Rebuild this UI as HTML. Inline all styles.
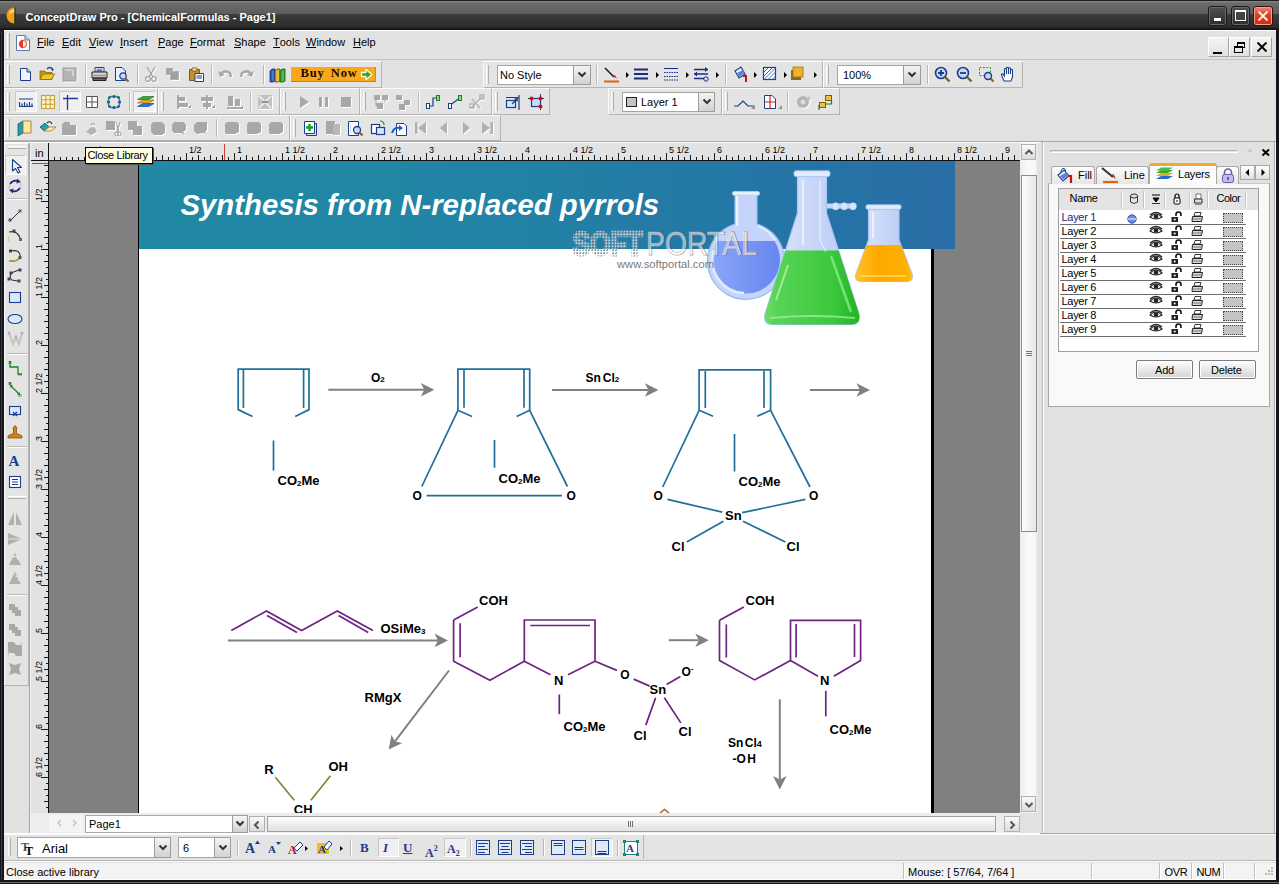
<!DOCTYPE html>
<html><head><meta charset="utf-8">
<style>
*{margin:0;padding:0;box-sizing:border-box}
html,body{width:1279px;height:884px;overflow:hidden;background:#e1e1e1;font-family:"Liberation Sans",sans-serif;font-size:11px;color:#000}
.a{position:absolute}
svg.a{overflow:visible}
.tbar{position:absolute;background:#e4e4e4;border-top:1px solid #fbfbfb;border-left:1px solid #fbfbfb;border-bottom:1px solid #b4b4b4;border-right:1px solid #b4b4b4}
.grip{position:absolute;width:3px;border-left:1px solid #fff;border-right:1px solid #b0b0b0;background:#e8e8e8}
.vsep{position:absolute;width:2px;border-left:1px solid #b8b8b8;border-right:1px solid #fff}
.hsep{position:absolute;height:2px;border-top:1px solid #b8b8b8;border-bottom:1px solid #fff}
.combo{position:absolute;background:#fff;border:1px solid #a5a5a5;border-right:none}
.cbtn{position:absolute;background:linear-gradient(#f4f4f4,#d2d2d2);border:1px solid #9c9c9c}
.pressed{position:absolute;background:#f0f0f0;border:1px solid #c8c8c8;border-bottom-color:#fff;border-right-color:#fff}
u{text-decoration:none;border-bottom:1px solid #000;line-height:10px;display:inline-block}
</style></head><body>
<div class="a" style="left:0px;top:0px;width:1279px;height:30px;background:linear-gradient(#1e1e1e 0,#1e1e1e 1px,#8a8a8a 1px,#6c6c6c 3px,#5c5c5c 14px,#3d3d3d 14px,#2e2e2e 25px,#262626 28px,#111 29px)"></div>
<svg class="a" style="left:4px;top:6px;" width="14" height="18" viewBox="0 0 14 18"><path d="M10.5 1.5 A8 8 0 0 0 10.5 17.5 Z" fill="#f0a010"/><path d="M10.5 3 A6 7 0 0 0 5 9 Q8 6 10.5 6Z" fill="#ffe890" opacity=".8"/><path d="M11 1.5 V17.5" stroke="#1a2a10" stroke-width="1"/></svg>
<div class="a" style="left:25.5px;top:11.69px;font-size:11px;line-height:11px;white-space:pre;color:#fff;font-weight:bold">ConceptDraw Pro - [ChemicalFormulas - Page1]</div>
<div class="a" style="left:1208px;top:6px;width:19px;height:20px;border:1px solid #1a1a1a;border-radius:3px;background:linear-gradient(#505050,#2c2c2c);box-shadow:inset 0 0 0 1px #6a6a6a"></div>
<div class="a" style="left:1214px;top:18px;width:7px;height:3px;background:#fff"></div>
<div class="a" style="left:1231px;top:6px;width:19px;height:20px;border:1px solid #1a1a1a;border-radius:3px;background:linear-gradient(#505050,#2c2c2c);box-shadow:inset 0 0 0 1px #6a6a6a"></div>
<div class="a" style="left:1235px;top:10px;width:11px;height:11px;border:1px solid #fff;border-top-width:2px;background:#444"></div>
<div class="a" style="left:1253px;top:6px;width:20px;height:20px;border:1px solid #3a1008;border-radius:3px;background:linear-gradient(#f08a70,#d8402a 45%,#c8301c);box-shadow:inset 0 0 0 1px #f4a090"></div>
<svg class="a" style="left:1257px;top:10px;" width="12" height="12" viewBox="0 0 12 12"><path d="M1.5 1.5 L10.5 10.5 M10.5 1.5 L1.5 10.5" stroke="#fff2d8" stroke-width="1.8"/></svg>
<div class="a" style="left:0px;top:29px;width:4px;height:855px;background:#14141c"></div>
<div class="a" style="left:1px;top:30px;width:1px;height:850px;background:#3a3a44"></div>
<div class="a" style="left:1276px;top:29px;width:3px;height:855px;background:#14141c"></div>
<div class="a" style="left:0px;top:880px;width:1279px;height:4px;background:#14141c"></div>
<div class="a" style="left:4px;top:30px;width:1272px;height:1px;background:#fff"></div>
<div class="a" style="left:4px;top:31px;width:1272px;height:29px;background:#e2e2e2;border-bottom:1px solid #c4c4c4"></div>
<div class="a" style="left:7px;top:33px;width:3px;height:25px;border-left:1px solid #fff;border-right:1px solid #aaa"></div>
<svg class="a" style="left:15px;top:34px;" width="16" height="18" viewBox="0 0 16 18"><path d="M1.5 1.5 H10 L14.5 6 V16.5 H1.5 Z" fill="#fff" stroke="#5a7ab0"/><path d="M10 1.5 V6 H14.5" fill="#b8c8e8" stroke="#5a7ab0"/><circle cx="8" cy="10" r="4.2" fill="#e84020"/><path d="M8 5.8 A4.2 4.2 0 0 1 8 14.2 Z" fill="#fff"/><path d="M8 6.5 A3.5 3.5 0 0 1 8 13.5" fill="none" stroke="#e84020" stroke-width="1"/></svg>
<div class="a" style="left:37px;top:36.69px;font-size:11px;line-height:11px;white-space:pre;"><u>F</u>ile</div>
<div class="a" style="left:62px;top:36.69px;font-size:11px;line-height:11px;white-space:pre;"><u>E</u>dit</div>
<div class="a" style="left:89px;top:36.69px;font-size:11px;line-height:11px;white-space:pre;"><u>V</u>iew</div>
<div class="a" style="left:120px;top:36.69px;font-size:11px;line-height:11px;white-space:pre;"><u>I</u>nsert</div>
<div class="a" style="left:158px;top:36.69px;font-size:11px;line-height:11px;white-space:pre;"><u>P</u>age</div>
<div class="a" style="left:190px;top:36.69px;font-size:11px;line-height:11px;white-space:pre;"><u>F</u>ormat</div>
<div class="a" style="left:234px;top:36.69px;font-size:11px;line-height:11px;white-space:pre;"><u>S</u>hape</div>
<div class="a" style="left:273px;top:36.69px;font-size:11px;line-height:11px;white-space:pre;"><u>T</u>ools</div>
<div class="a" style="left:306px;top:36.69px;font-size:11px;line-height:11px;white-space:pre;"><u>W</u>indow</div>
<div class="a" style="left:353px;top:36.69px;font-size:11px;line-height:11px;white-space:pre;"><u>H</u>elp</div>
<div class="a" style="left:1208px;top:37px;width:21px;height:20px;background:linear-gradient(#f4f4f4,#e0e0e0);border:1px solid #fff;border-right-color:#a0a0a0;border-bottom-color:#a0a0a0"></div>
<div class="a" style="left:1229px;top:37px;width:21px;height:20px;background:linear-gradient(#f4f4f4,#e0e0e0);border:1px solid #fff;border-right-color:#a0a0a0;border-bottom-color:#a0a0a0"></div>
<div class="a" style="left:1251px;top:37px;width:21px;height:20px;background:linear-gradient(#f4f4f4,#e0e0e0);border:1px solid #fff;border-right-color:#a0a0a0;border-bottom-color:#a0a0a0"></div>
<div class="a" style="left:1213px;top:52px;width:9px;height:2px;background:#000"></div>
<svg class="a" style="left:1233px;top:41px;" width="14" height="13" viewBox="0 0 14 13"><rect x="4.5" y="1.5" width="7" height="5" fill="none" stroke="#000"/><rect x="4.5" y="1.5" width="7" height="1.5" fill="#000"/><rect x="1.5" y="5.5" width="8" height="6" fill="#e8e8e8" stroke="#000"/><rect x="1.5" y="5.5" width="8" height="1.5" fill="#000"/></svg>
<svg class="a" style="left:1256px;top:41px;" width="12" height="12" viewBox="0 0 12 12"><path d="M1.5 1.5 L10.5 10.5 M10.5 1.5 L1.5 10.5" stroke="#000" stroke-width="1.8"/></svg>
<div class="a" style="left:4px;top:60px;width:1272px;height:82px;background:#e1e1e1"></div>
<div class="tbar" style="left:4px;top:61px;width:378px;height:27px"></div>
<div class="grip" style="left:7px;top:65px;height:19px"></div>
<svg class="a" style="left:17px;top:66px;" width="16" height="16" viewBox="0 0 16 16"><path d="M3.5 2.5 H10 L13.5 6 V14.5 H3.5 Z" fill="#eef4fc" stroke="#1c3c8c"/><path d="M10 2.5 V6 H13.5" fill="#c8d8f0" stroke="#1c3c8c"/></svg>
<svg class="a" style="left:39px;top:66px;" width="16" height="16" viewBox="0 0 16 16"><path d="M1 5 H6 L7 6.5 H13 V13.5 H1 Z" fill="#c89810" stroke="#8a6a00" stroke-width=".8"/><path d="M1 13.5 L4 8 H15.5 L12.5 13.5 Z" fill="#f0c828" stroke="#8a6a00" stroke-width=".8"/><path d="M8 3 Q11 0 13.5 3" fill="none" stroke="#1c3c8c" stroke-width="1.3"/><path d="M12 2.5 L15 3 L13.5 5.5Z" fill="#1c3c8c"/></svg>
<svg class="a" style="left:61px;top:66px;filter:drop-shadow(1px 1px 0 #fff)" width="16" height="16" viewBox="0 0 16 16"><rect x="2" y="2" width="13" height="13" fill="#b4b4b4" stroke="#9c9c9c"/><path d="M4 4 H12 V10" fill="none" stroke="#e8e8e8" stroke-width="1.2"/></svg>
<svg class="a" style="left:91px;top:66px;" width="16" height="16" viewBox="0 0 16 16"><path d="M4 1.5 H13 V6 H4Z" fill="#fff" stroke="#1c3c8c"/><path d="M5.5 3.2 H11.5 M5.5 4.6 H11" stroke="#1c3c8c" stroke-width=".8"/><path d="M1 6 H16 V12 H1Z" fill="#d0d8e8" stroke="#222"/><path d="M1 9.5 H16" stroke="#c09030" stroke-width="1.5"/><path d="M2 12 H15 V14.5 H2Z" fill="#666" stroke="#222"/></svg>
<svg class="a" style="left:113px;top:66px;" width="16" height="16" viewBox="0 0 16 16"><path d="M2.5 1.5 H9 L12.5 5 V14.5 H2.5 Z" fill="#e8f0fc" stroke="#1c3c8c"/><circle cx="10" cy="10" r="3.2" fill="#c8ddf5" stroke="#1c3c8c" stroke-width="1.2"/><path d="M12.2 12.2 L15.5 15.5" stroke="#8a5a20" stroke-width="1.8"/></svg>
<svg class="a" style="left:143px;top:66px;filter:drop-shadow(1px 1px 0 #fff)" width="16" height="16" viewBox="0 0 16 16"><path d="M4 1 L10 11 M12 1 L6 11" stroke="#a0a0a0" stroke-width="1.3"/><circle cx="5" cy="13" r="2.3" fill="none" stroke="#a0a0a0" stroke-width="1.2"/><circle cx="11" cy="13" r="2.3" fill="none" stroke="#a0a0a0" stroke-width="1.2"/></svg>
<svg class="a" style="left:165px;top:66px;filter:drop-shadow(1px 1px 0 #fff)" width="16" height="16" viewBox="0 0 16 16"><path d="M1 2 H8 V9 H1Z" fill="#a6a6a6"/><path d="M5 5 H14 V14 H5Z" fill="#b0b0b0"/><path d="M6 6 H13 V13 H6Z" fill="#a0a0a0"/></svg>
<svg class="a" style="left:188px;top:66px;" width="16" height="16" viewBox="0 0 16 16"><path d="M1.5 3.5 H11.5 V14.5 H1.5Z" fill="#c89020" stroke="#7a5a10"/><path d="M4 2 H9 V5 H4Z" fill="#e8e0c0" stroke="#7a5a10" stroke-width=".8"/><path d="M7 7.5 H15.5 V15.5 H7Z" fill="#fff" stroke="#1c3c8c"/><path d="M8.5 10 H14 M8.5 12 H14" stroke="#1c3c8c" stroke-width="1.2"/></svg>
<svg class="a" style="left:217px;top:66px;filter:drop-shadow(1px 1px 0 #fff)" width="16" height="16" viewBox="0 0 16 16"><path d="M3 9 Q7 3 13 7 L14 11" fill="none" stroke="#a8a8a8" stroke-width="2.5"/><path d="M1 5 L3 11 L8 9 Z" fill="#a8a8a8"/></svg>
<svg class="a" style="left:239px;top:66px;filter:drop-shadow(1px 1px 0 #fff)" width="16" height="16" viewBox="0 0 16 16"><path d="M13 9 Q9 3 3 7 L2 11" fill="none" stroke="#a8a8a8" stroke-width="2.5"/><path d="M15 5 L13 11 L8 9 Z" fill="#a8a8a8"/></svg>
<svg class="a" style="left:269px;top:66px;" width="16" height="16" viewBox="0 0 16 16"><path d="M1 5 L3 3 H6 V15 L4 16 H1Z" fill="#2060c8" stroke="#102050" stroke-width=".7"/><path d="M6 5 L8 3 H11 V15 L9 16 H6Z" fill="#e8b020" stroke="#503800" stroke-width=".7"/><path d="M11 5 L13 3 H16 V15 L14 16 H11Z" fill="#30b030" stroke="#104010" stroke-width=".7"/><path d="M4 5 V15 M9 5 V15 M14 5 V15" stroke="#fff" stroke-opacity=".5" stroke-width=".7"/></svg>
<div class="vsep" style="left:85px;top:65px;height:19px"></div>
<div class="vsep" style="left:137px;top:65px;height:19px"></div>
<div class="vsep" style="left:211px;top:65px;height:19px"></div>
<div class="vsep" style="left:263px;top:65px;height:19px"></div>
<div class="a" style="left:291px;top:67px;width:85px;height:15px;background:#f8a818;border-right:1px solid #d88808;border-bottom:1px solid #d08000"></div>
<div class="a" style="left:300.5px;top:67.42px;font-size:12.5px;line-height:12.5px;white-space:pre;font-family:'Liberation Serif';font-weight:bold;letter-spacing:0.9px;word-spacing:2px;color:#1a0a00">Buy Now</div>
<svg class="a" style="left:360px;top:68px;" width="13" height="13" viewBox="0 0 13 13"><path d="M1.5 4.5 H6 V1.2 L11.8 6.5 L6 11.8 V8.5 H1.5Z" fill="#30a030" stroke="#fff6e0" stroke-width="1.3" stroke-linejoin="round"/></svg>
<div class="tbar" style="left:483px;top:61px;width:340px;height:27px"></div>
<div class="grip" style="left:486px;top:65px;height:19px"></div>
<div class="combo" style="left:497px;top:65px;width:77px;height:20px"></div>
<div class="cbtn" style="left:573px;top:65px;width:18px;height:20px"></div>
<svg class="a" style="left:577px;top:71px;" width="10" height="8" viewBox="0 0 10 8"><path d="M1.5 1.5 L5 5 L8.5 1.5" fill="none" stroke="#333" stroke-width="2"/></svg>
<div class="a" style="left:500px;top:69.69px;font-size:11px;line-height:11px;white-space:pre;">No Style</div>
<div class="vsep" style="left:596px;top:65px;height:19px"></div>
<svg class="a" style="left:603px;top:66px;" width="16" height="16" viewBox="0 0 16 16"><path d="M2 2 L11 11" stroke="#222" stroke-width="1.6"/><path d="M10 10 L14 13 L12 9Z" fill="#c03010"/><path d="M1 15.5 H16" stroke="#e06010" stroke-width="2"/></svg>
<svg class="a" style="left:625.5px;top:72px;" width="3" height="6" viewBox="0 0 3 6"><path d="M0 0 L3 3 L0 6Z" fill="#000"/></svg>
<svg class="a" style="left:633px;top:66px;" width="16" height="16" viewBox="0 0 16 16"><path d="M1 3.5 H15 M1 8 H15 M1 12.5 H15" stroke="#1c2c7c" stroke-width="2"/></svg>
<svg class="a" style="left:655.5px;top:72px;" width="3" height="6" viewBox="0 0 3 6"><path d="M0 0 L3 3 L0 6Z" fill="#000"/></svg>
<svg class="a" style="left:663px;top:66px;" width="16" height="16" viewBox="0 0 16 16"><path d="M1 2.5 H15" stroke="#1c2c7c" stroke-width="1"/><path d="M1 6.5 H15 M1 10.5 H15 M1 14 H15" stroke="#1c2c7c" stroke-width="1" stroke-dasharray="1.5 1"/></svg>
<svg class="a" style="left:685.5px;top:72px;" width="3" height="6" viewBox="0 0 3 6"><path d="M0 0 L3 3 L0 6Z" fill="#000"/></svg>
<svg class="a" style="left:693px;top:66px;" width="16" height="16" viewBox="0 0 16 16"><path d="M1 3.5 H15 M1 8 H15 M1 12.5 H11" stroke="#1c2c7c" stroke-width="1.4"/><path d="M12 1 L15 3.5 L12 6Z M4 5.5 L1 8 L4 10.5Z" fill="#1c2c7c"/><circle cx="13" cy="13" r="2.2" fill="none" stroke="#1c2c7c"/></svg>
<svg class="a" style="left:715.5px;top:72px;" width="3" height="6" viewBox="0 0 3 6"><path d="M0 0 L3 3 L0 6Z" fill="#000"/></svg>
<svg class="a" style="left:732px;top:66px;" width="16" height="16" viewBox="0 0 16 16"><path d="M3 5 L9 1 L13 8 L7 12Z" fill="#e8eef8" stroke="#1c3c8c" stroke-width="1.1"/><path d="M5 7 L11 4 L12.5 7 L7 11Z" fill="#6080d0"/><path d="M13 8 Q15 11 14 13" fill="none" stroke="#6080d0" stroke-width="1.2"/><path d="M11 10 H14 V16" fill="none" stroke="#c01818" stroke-width="2"/></svg>
<svg class="a" style="left:753.5px;top:72px;" width="3" height="6" viewBox="0 0 3 6"><path d="M0 0 L3 3 L0 6Z" fill="#000"/></svg>
<svg class="a" style="left:762px;top:66px;" width="16" height="16" viewBox="0 0 16 16"><rect x="1.5" y="1.5" width="12" height="12" fill="#fff" stroke="#1c3c8c" stroke-width="1.2"/><path d="M2 6 L6 2 M2 10 L10 2 M2 13.5 L13.5 2 M6 13.5 L13.5 6 M10 13.5 L13.5 10" stroke="#3c6cc8" stroke-width="1"/></svg>
<svg class="a" style="left:783.5px;top:72px;" width="3" height="6" viewBox="0 0 3 6"><path d="M0 0 L3 3 L0 6Z" fill="#000"/></svg>
<svg class="a" style="left:790px;top:66px;" width="16" height="16" viewBox="0 0 16 16"><rect x="1" y="4" width="10" height="10" fill="#8a6a20"/><rect x="3" y="1" width="10" height="10" fill="#f0b030" stroke="#a07010" stroke-width=".8"/></svg>
<svg class="a" style="left:813.5px;top:72px;" width="3" height="6" viewBox="0 0 3 6"><path d="M0 0 L3 3 L0 6Z" fill="#000"/></svg>
<div class="vsep" style="left:725px;top:65px;height:19px"></div>
<div class="tbar" style="left:823px;top:61px;width:200px;height:27px"></div>
<div class="grip" style="left:826px;top:65px;height:19px"></div>
<div class="combo" style="left:837px;top:65px;width:67px;height:20px"></div>
<div class="cbtn" style="left:903px;top:65px;width:18px;height:20px"></div>
<svg class="a" style="left:907px;top:71px;" width="10" height="8" viewBox="0 0 10 8"><path d="M1.5 1.5 L5 5 L8.5 1.5" fill="none" stroke="#333" stroke-width="2"/></svg>
<div class="a" style="left:843px;top:69.69px;font-size:11px;line-height:11px;white-space:pre;">100%</div>
<div class="vsep" style="left:927px;top:65px;height:19px"></div>
<svg class="a" style="left:934px;top:66px;" width="16" height="16" viewBox="0 0 16 16"><circle cx="7" cy="7" r="5.5" fill="#c8d8f0" stroke="#1c3c8c" stroke-width="1.6"/><path d="M4 7 H10 M7 4 V10" stroke="#1c3c8c" stroke-width="1.8"/><path d="M11 11 L15.5 15.5" stroke="#8a5a10" stroke-width="2.4"/></svg>
<svg class="a" style="left:956px;top:66px;" width="16" height="16" viewBox="0 0 16 16"><circle cx="7" cy="7" r="5.5" fill="#c8d8f0" stroke="#1c3c8c" stroke-width="1.6"/><path d="M4 7 H10" stroke="#1c3c8c" stroke-width="1.8"/><path d="M11 11 L15.5 15.5" stroke="#8a5a10" stroke-width="2.4"/></svg>
<svg class="a" style="left:978px;top:66px;" width="16" height="16" viewBox="0 0 16 16"><rect x="1.5" y="1.5" width="11" height="8" fill="none" stroke="#20a020" stroke-dasharray="2 1.5"/><circle cx="10" cy="10" r="3.5" fill="#c8d8f0" stroke="#1c3c8c" stroke-width="1.4"/><path d="M12.5 12.5 L15.5 15.5" stroke="#8a5a10" stroke-width="2"/></svg>
<svg class="a" style="left:1000px;top:66px;" width="16" height="16" viewBox="0 0 16 16"><path d="M4 15 L1.5 9 Q1.5 7.5 3 8 L4.5 10 V3 Q5.5 1.5 6.5 3 V8 V2 Q7.5 0.5 8.5 2 V8 V2.5 Q9.5 1 10.5 2.5 V8 V4 Q11.5 2.5 12.5 4 V11 L11 15Z" fill="#fff" stroke="#1c3c8c" stroke-width="1.1"/></svg>
<div class="tbar" style="left:4px;top:88px;width:154px;height:27px"></div>
<div class="grip" style="left:7px;top:92px;height:19px"></div>
<div class="pressed" style="left:15px;top:91px;width:22px;height:21px"></div>
<div class="pressed" style="left:59px;top:91px;width:22px;height:21px"></div>
<div class="pressed" style="left:133px;top:91px;width:23px;height:21px"></div>
<svg class="a" style="left:18px;top:94px;" width="16" height="16" viewBox="0 0 16 16"><path d="M1 5 H15" stroke="#1c3c8c"/><path d="M1 12.5 H15 M1.5 12 V8 M4 12 V9.5 M6.5 12 V8 M9 12 V9.5 M11.5 12 V8 M14 12 V9.5" stroke="#1c3c8c" stroke-width="1.2"/></svg>
<svg class="a" style="left:40px;top:94px;" width="16" height="16" viewBox="0 0 16 16"><rect x="1.5" y="1.5" width="13" height="13" fill="#fff4c8" stroke="#c8a040" stroke-width="1.1"/><path d="M1.5 5.8 H14.5 M1.5 10.2 H14.5 M5.8 1.5 V14.5 M10.2 1.5 V14.5" stroke="#c8a040" stroke-width="1.1"/></svg>
<svg class="a" style="left:62px;top:94px;" width="16" height="16" viewBox="0 0 16 16"><path d="M1 4.5 H16 M5.5 1 V16" stroke="#1c3c8c" stroke-width="1.3"/></svg>
<svg class="a" style="left:84px;top:94px;" width="16" height="16" viewBox="0 0 16 16"><path d="M2.5 2.5 H13.5 V13.5 H2.5Z M8 2.5 V13.5 M2.5 8 H13.5" fill="#fff" stroke="#555" stroke-width="1"/></svg>
<svg class="a" style="left:106px;top:94px;" width="16" height="16" viewBox="0 0 16 16"><rect x="2.5" y="2.5" width="11" height="11" rx="3" fill="none" stroke="#20a040" stroke-width="1.4"/><g fill="#2050c0"><circle cx="8" cy="2.5" r="1.6"/><circle cx="8" cy="13.5" r="1.6"/><circle cx="2.5" cy="8" r="1.6"/><circle cx="13.5" cy="8" r="1.6"/><circle cx="3.5" cy="3.5" r="1.3"/><circle cx="12.5" cy="12.5" r="1.3"/><circle cx="12.5" cy="3.5" r="1.3"/><circle cx="3.5" cy="12.5" r="1.3"/></g></svg>
<svg class="a" style="left:137px;top:94px;" width="16" height="16" viewBox="0 0 16 16"><path d="M0.5 12.5 L6 9.5 H17 L11.5 12.5Z" fill="#2870e0" stroke="#103880" stroke-width=".6"/><path d="M0.5 9 L6 6 H17 L11.5 9Z" fill="#e8b020" stroke="#806000" stroke-width=".6"/><path d="M0.5 5.5 L6 2.5 H17 L11.5 5.5Z" fill="#30b030" stroke="#106010" stroke-width=".6"/></svg>
<div class="vsep" style="left:129px;top:92px;height:19px"></div>
<div class="tbar" style="left:158px;top:88px;width:122px;height:27px"></div>
<div class="grip" style="left:161px;top:92px;height:19px"></div>
<svg class="a" style="left:175px;top:94px;filter:drop-shadow(1px 1px 0 #fff)" width="16" height="16" viewBox="0 0 16 16"><g fill="#a8a8a8"><rect x="2" y="1" width="2" height="14"/><rect x="4" y="3" width="6" height="4"/><rect x="4" y="9" width="9" height="4"/></g><path d="M13 14 L16 14 L16 11Z" fill="#909090"/></svg>
<svg class="a" style="left:199px;top:94px;filter:drop-shadow(1px 1px 0 #fff)" width="16" height="16" viewBox="0 0 16 16"><g fill="#a8a8a8"><rect x="7" y="1" width="2" height="14"/><rect x="2" y="3" width="12" height="4"/><rect x="4" y="9" width="8" height="4"/></g><path d="M13 14 L16 14 L16 11Z" fill="#909090"/></svg>
<svg class="a" style="left:226px;top:94px;filter:drop-shadow(1px 1px 0 #fff)" width="16" height="16" viewBox="0 0 16 16"><g fill="#a8a8a8"><rect x="1" y="13" width="14" height="2"/><rect x="2" y="2" width="5" height="10"/><rect x="9" y="5" width="5" height="7"/></g><path d="M14 15 L17 15 L17 12Z" fill="#909090"/></svg>
<svg class="a" style="left:257px;top:94px;filter:drop-shadow(1px 1px 0 #fff)" width="16" height="16" viewBox="0 0 16 16"><rect x="1" y="1" width="14" height="14" fill="#c0c0c0"/><path d="M2 2 L14 14 M14 2 L2 14" stroke="#e8e8e8" stroke-width="2"/><path d="M5 8 H11" stroke="#909090" stroke-width="2"/></svg>
<div class="vsep" style="left:250px;top:92px;height:19px"></div>
<div class="tbar" style="left:280px;top:88px;width:80px;height:27px"></div>
<div class="grip" style="left:283px;top:92px;height:19px"></div>
<svg class="a" style="left:296px;top:94px;filter:drop-shadow(1px 1px 0 #fff)" width="16" height="16" viewBox="0 0 16 16"><path d="M4 2 L13 8 L4 14Z" fill="#a8a8a8"/></svg>
<svg class="a" style="left:316px;top:94px;filter:drop-shadow(1px 1px 0 #fff)" width="16" height="16" viewBox="0 0 16 16"><rect x="3" y="3" width="3" height="10" fill="#a8a8a8"/><rect x="9" y="3" width="3" height="10" fill="#a8a8a8"/></svg>
<svg class="a" style="left:338px;top:94px;filter:drop-shadow(1px 1px 0 #fff)" width="16" height="16" viewBox="0 0 16 16"><rect x="3" y="3" width="10" height="10" fill="#a8a8a8"/></svg>
<div class="tbar" style="left:360px;top:88px;width:132px;height:27px"></div>
<div class="grip" style="left:363px;top:92px;height:19px"></div>
<svg class="a" style="left:373px;top:94px;filter:drop-shadow(1px 1px 0 #fff)" width="16" height="16" viewBox="0 0 16 16"><g fill="#a8a8a8"><rect x="1" y="1" width="6" height="5"/><rect x="9" y="1" width="6" height="5"/><rect x="4" y="9" width="6" height="6"/><path d="M3 6 V12 H4 M12 6 V8" stroke="#a8a8a8"/></g></svg>
<svg class="a" style="left:395px;top:94px;filter:drop-shadow(1px 1px 0 #fff)" width="16" height="16" viewBox="0 0 16 16"><g fill="#a8a8a8"><rect x="1" y="1" width="6" height="5"/><rect x="9" y="6" width="6" height="5"/><rect x="4" y="10" width="6" height="6"/></g></svg>
<svg class="a" style="left:425px;top:94px;" width="16" height="16" viewBox="0 0 16 16"><rect x="1.5" y="9.5" width="3" height="5" fill="#fff" stroke="#1c3c8c"/><rect x="11.5" y="1.5" width="3" height="5" fill="#80e080" stroke="#208020"/><path d="M4.5 12 H8 V4 H11.5" fill="none" stroke="#1c3c8c" stroke-width="1.2"/></svg>
<svg class="a" style="left:447px;top:94px;" width="16" height="16" viewBox="0 0 16 16"><rect x="1.5" y="9.5" width="3" height="5" fill="#fff" stroke="#1c3c8c"/><rect x="11.5" y="1.5" width="3" height="5" fill="#80e080" stroke="#208020"/><path d="M4.5 10 L11.5 5" stroke="#1c3c8c" stroke-width="1.2"/></svg>
<svg class="a" style="left:469px;top:94px;filter:drop-shadow(1px 1px 0 #fff)" width="16" height="16" viewBox="0 0 16 16"><g fill="none" stroke="#b0b0b0" stroke-width="1.4"><path d="M2 14 L14 2 M3 5 L11 14"/><rect x="11" y="1" width="4" height="4"/><rect x="1" y="10" width="4" height="4"/></g></svg>
<div class="vsep" style="left:418px;top:92px;height:19px"></div>
<div class="tbar" style="left:492px;top:88px;width:58px;height:27px"></div>
<div class="grip" style="left:495px;top:92px;height:19px"></div>
<svg class="a" style="left:505px;top:94px;" width="16" height="16" viewBox="0 0 16 16"><rect x="1.5" y="6.5" width="9" height="7" fill="#d8e8f8" stroke="#1c3c8c" stroke-width="1.2"/><path d="M1 3.5 H14 M14 1 V16" stroke="#1c3c8c" stroke-width="1.2"/><path d="M7 10 L12 5" stroke="#1c3c8c" stroke-width="1.2"/><path d="M13 4 L9 4.5 L12.5 8Z" fill="#1c3c8c"/></svg>
<svg class="a" style="left:528px;top:94px;" width="16" height="16" viewBox="0 0 16 16"><rect x="3.5" y="4.5" width="9" height="8" fill="#c8ddf5" stroke="#1c3c8c" stroke-width="1.2"/><path d="M0 4.5 H16 M12.5 0 V16" stroke="#1c3c8c"/><g fill="#d01010"><circle cx="3.5" cy="4.5" r="2"/><circle cx="12.5" cy="4.5" r="2"/><circle cx="12.5" cy="12.5" r="2"/></g></svg>
<div class="tbar" style="left:608px;top:88px;width:114px;height:27px"></div>
<div class="grip" style="left:611px;top:92px;height:19px"></div>
<div class="combo" style="left:622px;top:92px;width:77px;height:20px"></div>
<div class="cbtn" style="left:698px;top:92px;width:17px;height:20px"></div>
<svg class="a" style="left:702px;top:98px;" width="10" height="8" viewBox="0 0 10 8"><path d="M1.5 1.5 L5 5 L8.5 1.5" fill="none" stroke="#333" stroke-width="2"/></svg>
<div class="a" style="left:626px;top:97px;width:11px;height:10px;background:#c4c4c4;border:1px solid #222"></div>
<div class="a" style="left:641px;top:96.69px;font-size:11px;line-height:11px;white-space:pre;">Layer 1</div>
<div class="tbar" style="left:722px;top:88px;width:118px;height:27px"></div>
<div class="grip" style="left:725px;top:92px;height:19px"></div>
<svg class="a" style="left:734px;top:94px;" width="16" height="16" viewBox="0 0 16 16"><path d="M0 12 L4 12 L9 7 L14 12 L20 12" fill="none" stroke="#1c3c8c" stroke-width="1.2"/><path d="M17 15 L21 15 L21 11Z" fill="#909090"/></svg>
<svg class="a" style="left:763px;top:94px;" width="16" height="16" viewBox="0 0 16 16"><path d="M1.5 1.5 H9 L12.5 5 V14.5 H1.5Z" fill="#fff" stroke="#1c3c8c"/><path d="M1.5 8 H12.5 M7 1.5 V14.5" stroke="#d02020" stroke-width="1.2"/><path d="M15 15 L19 15 L19 11Z" fill="#909090"/></svg>
<svg class="a" style="left:795px;top:94px;filter:drop-shadow(1px 1px 0 #fff)" width="16" height="16" viewBox="0 0 16 16"><circle cx="8" cy="8" r="6" fill="#b4b4b4"/><circle cx="8" cy="8" r="2.5" fill="#dcdcdc"/><path d="M12 1 L16 4 L14 8Z" fill="#c4c4c4"/></svg>
<svg class="a" style="left:818px;top:94px;" width="16" height="16" viewBox="0 0 16 16"><rect x="7.5" y="1.5" width="6" height="5" fill="#f0c040" stroke="#806000"/><rect x="1.5" y="8.5" width="6" height="5" fill="#f0c040" stroke="#806000"/><path d="M1 16 V11 M13.5 6.5 V10 H7.5" fill="none" stroke="#208020" stroke-width="1.2"/></svg>
<div class="vsep" style="left:787px;top:92px;height:19px"></div>
<div class="tbar" style="left:4px;top:115px;width:286px;height:26px"></div>
<div class="grip" style="left:7px;top:119px;height:18px"></div>
<svg class="a" style="left:17px;top:120px;" width="16" height="16" viewBox="0 0 16 16"><path d="M1 4 L6 1 V13 L1 16Z" fill="#20a0b0" stroke="#106070" stroke-width=".8"/><path d="M6 1 H14 V13 H6Z" fill="#fbe8a8" stroke="#a08020" stroke-width=".9"/></svg>
<svg class="a" style="left:39px;top:120px;" width="16" height="16" viewBox="0 0 16 16"><path d="M1 7 L6 3 L10 7 L5 11Z" fill="#20a0b0" stroke="#106070" stroke-width=".8"/><path d="M5 11 L10 7 H17 L12 11Z" fill="#fbe8a8" stroke="#a08020" stroke-width=".8"/><path d="M8 3 Q11 0 13 4" fill="none" stroke="#222" stroke-width="1.1"/></svg>
<svg class="a" style="left:61px;top:120px;filter:drop-shadow(1px 1px 0 #fff)" width="16" height="16" viewBox="0 0 16 16"><g fill="#a8a8a8"><path d="M1 4 L5 1 V15 H1Z"/><rect x="5" y="5" width="10" height="10"/><rect x="5" y="2" width="4" height="3"/></g></svg>
<svg class="a" style="left:83px;top:120px;filter:drop-shadow(1px 1px 0 #fff)" width="16" height="16" viewBox="0 0 16 16"><path d="M3 12 L7 8 Q10 6 12 8 L14 12 L8 15Z" fill="#b4b4b4"/><path d="M8 5 Q10 2 12 5" fill="none" stroke="#b4b4b4" stroke-width="1.6"/></svg>
<svg class="a" style="left:105px;top:120px;filter:drop-shadow(1px 1px 0 #fff)" width="16" height="16" viewBox="0 0 16 16"><rect x="1" y="1" width="9" height="9" fill="#a8a8a8"/><path d="M11 2 L14 12 M15 2 L12 12" stroke="#a0a0a0"/><circle cx="11.5" cy="14" r="1.8" fill="none" stroke="#a0a0a0"/><circle cx="14.5" cy="14" r="1.8" fill="none" stroke="#a0a0a0"/></svg>
<svg class="a" style="left:127px;top:120px;filter:drop-shadow(1px 1px 0 #fff)" width="16" height="16" viewBox="0 0 16 16"><g fill="#a8a8a8"><rect x="1" y="1" width="9" height="9"/><rect x="6" y="6" width="9" height="9"/></g></svg>
<svg class="a" style="left:150px;top:120px;filter:drop-shadow(1px 1px 0 #fff)" width="16" height="16" viewBox="0 0 16 16"><path d="M3 2 H12 L15 5 V13 L12 15 H4 L1 12 V5Z" fill="#a8a8a8"/></svg>
<svg class="a" style="left:171px;top:120px;filter:drop-shadow(1px 1px 0 #fff)" width="16" height="16" viewBox="0 0 16 16"><path d="M3 2 H13 L15 5 V10 L12 12 L14 15 L10 13 H3 L1 10 V5Z" fill="#a8a8a8"/></svg>
<svg class="a" style="left:193px;top:120px;filter:drop-shadow(1px 1px 0 #fff)" width="16" height="16" viewBox="0 0 16 16"><path d="M4 2 H14 V10 L12 12 L15 15 L11 13 L4 14 L1 11 V5Z" fill="#a8a8a8"/></svg>
<svg class="a" style="left:224px;top:120px;filter:drop-shadow(1px 1px 0 #fff)" width="16" height="16" viewBox="0 0 16 16"><path d="M3 2 H13 L15 4 V12 L11 14 H2 L1 12 V4Z" fill="#a8a8a8"/></svg>
<svg class="a" style="left:246px;top:120px;filter:drop-shadow(1px 1px 0 #fff)" width="16" height="16" viewBox="0 0 16 16"><path d="M3 2 H13 L15 4 V12 L11 14 H2 L1 12 V4Z" fill="#a8a8a8"/></svg>
<svg class="a" style="left:268px;top:120px;filter:drop-shadow(1px 1px 0 #fff)" width="16" height="16" viewBox="0 0 16 16"><path d="M3 2 H13 L15 4 V12 L11 14 H2 L1 12 V4Z" fill="#a8a8a8"/></svg>
<div class="vsep" style="left:216px;top:119px;height:18px"></div>
<div class="tbar" style="left:290px;top:115px;width:211px;height:26px"></div>
<div class="grip" style="left:293px;top:119px;height:18px"></div>
<svg class="a" style="left:303px;top:120px;" width="16" height="16" viewBox="0 0 16 16"><path d="M3.5 3.5 H13.5 V15.5 H3.5Z" fill="#d8e4f8" stroke="#1c3c8c"/><path d="M1.5 1.5 H11.5 V13.5 H1.5Z" fill="#fff" stroke="#1c3c8c"/><path d="M6.5 4 V11 M3 7.5 H10" stroke="#10a020" stroke-width="2.4"/></svg>
<svg class="a" style="left:325px;top:120px;filter:drop-shadow(1px 1px 0 #fff)" width="16" height="16" viewBox="0 0 16 16"><path d="M1 1 H10 V14 H1Z" fill="#a8a8a8"/><path d="M8 4 H15 V15 H8Z" fill="#b8b8b8"/></svg>
<svg class="a" style="left:347px;top:120px;" width="16" height="16" viewBox="0 0 16 16"><path d="M1.5 1.5 H11.5 V15.5 H1.5Z" fill="#fff" stroke="#1c3c8c"/><path d="M3.5 3.5 V13.5" stroke="#c8d8f0"/><circle cx="10" cy="10" r="3.5" fill="#c8ddf5" stroke="#1c3c8c" stroke-width="1.3"/><path d="M12.5 12.5 L15.5 15.5" stroke="#8a5a10" stroke-width="2"/></svg>
<svg class="a" style="left:370px;top:120px;" width="16" height="16" viewBox="0 0 16 16"><rect x="1.5" y="4.5" width="8" height="9" fill="#fff" stroke="#1c3c8c" stroke-width="1.2"/><rect x="6.5" y="7.5" width="8" height="7" fill="#d8e4f8" stroke="#1c3c8c" stroke-width="1.2"/><path d="M10 1 Q14 1 14 5" fill="none" stroke="#10a020" stroke-width="1.2"/></svg>
<svg class="a" style="left:391px;top:120px;" width="16" height="16" viewBox="0 0 16 16"><path d="M5.5 3.5 H13 L15.5 6 V15.5 H5.5Z" fill="#fff" stroke="#1c3c8c"/><path d="M1 13 Q3 7 9 8" fill="none" stroke="#1c5cc8" stroke-width="2"/><path d="M8 5 L12 8 L8 11Z" fill="#1c5cc8"/></svg>
<svg class="a" style="left:413px;top:120px;filter:drop-shadow(1px 1px 0 #fff)" width="16" height="16" viewBox="0 0 16 16"><rect x="2" y="2" width="2.5" height="12" fill="#b0b0b0"/><path d="M13 2 L5 8 L13 14Z" fill="#b0b0b0"/></svg>
<svg class="a" style="left:436px;top:120px;filter:drop-shadow(1px 1px 0 #fff)" width="16" height="16" viewBox="0 0 16 16"><path d="M11 2 L4 8 L11 14Z" fill="#b0b0b0"/></svg>
<svg class="a" style="left:458px;top:120px;filter:drop-shadow(1px 1px 0 #fff)" width="16" height="16" viewBox="0 0 16 16"><path d="M5 2 L12 8 L5 14Z" fill="#b0b0b0"/></svg>
<svg class="a" style="left:479px;top:120px;filter:drop-shadow(1px 1px 0 #fff)" width="16" height="16" viewBox="0 0 16 16"><rect x="11.5" y="2" width="2.5" height="12" fill="#b0b0b0"/><path d="M3 2 L11 8 L3 14Z" fill="#b0b0b0"/></svg>
<div class="a" style="left:4px;top:141px;width:1272px;height:1px;background:#a8a8a8"></div>
<div class="a" style="left:4px;top:142px;width:1272px;height:1px;background:#fff"></div>
<div class="a" style="left:4px;top:143px;width:26px;height:690px;background:#e1e1e1"></div>
<div class="a" style="left:4px;top:143px;width:25px;height:543px;background:#e4e4e4;border-top:1px solid #fbfbfb;border-left:1px solid #fbfbfb;border-bottom:1px solid #b4b4b4;border-right:1px solid #b4b4b4"></div>
<div class="a" style="left:8px;top:146px;width:18px;height:3px;border-top:1px solid #fff;border-bottom:1px solid #b0b0b0;background:#e8e8e8"></div>
<div class="pressed" style="left:5px;top:155px;width:21px;height:20px"></div>
<svg class="a" style="left:9px;top:158px;" width="16" height="16" viewBox="0 0 16 16"><path d="M3.5 1.5 L3.5 13 L6.5 10.5 L9 15 L11 14 L8.5 9.5 L12.5 9.5 Z" fill="#e8f4fc" stroke="#1c3c8c" stroke-width="1.1" stroke-linejoin="round"/></svg>
<svg class="a" style="left:7px;top:178px;" width="16" height="16" viewBox="0 0 16 16"><path d="M3 6 Q6 1.5 11 3" fill="none" stroke="#2a2a70" stroke-width="1.6"/><path d="M13 10 Q10 14.5 5 13" fill="none" stroke="#2a2a70" stroke-width="1.6"/><path d="M10 0.5 L14 4 L9.5 5.5Z M6 15.5 L2 12 L6.5 10.5Z" fill="#2a2a70"/><path d="M3 6 Q1 9 3 12 M13 10 Q15 7 13 4" fill="none" stroke="#b8b8d8" stroke-width="1"/></svg>
<div class="a" style="left:7px;top:198px;width:20px;height:2px;border-top:1px solid #b8b8b8;border-bottom:1px solid #fff"></div>
<svg class="a" style="left:7px;top:208px;" width="16" height="16" viewBox="0 0 16 16"><path d="M3.5 12.5 L12.5 3.5" stroke="#333" stroke-width="1"/><rect x="1.5" y="10.5" width="3" height="3" fill="#556" /><rect x="11.5" y="1.5" width="3" height="3" fill="#667"/></svg>
<svg class="a" style="left:7px;top:228px;" width="16" height="16" viewBox="0 0 16 16"><path d="M2 4 Q10 2 13 10" fill="none" stroke="#333" stroke-width="1.1"/><rect x="5.5" y="1.5" width="3" height="3" fill="#445"/><rect x="12" y="10" width="3" height="3" fill="#667"/><path d="M2 8 Q1 12 2 14" stroke="#e0c080" fill="none"/></svg>
<svg class="a" style="left:7px;top:248px;" width="16" height="16" viewBox="0 0 16 16"><path d="M3 3 Q14 1 13 9 Q11 14 2 13" fill="none" stroke="#333" stroke-width="1.1"/><path d="M13 9 Q11 14 2 13" fill="none" stroke="#e0a030" stroke-width="1.3"/><rect x="2" y="1.5" width="3" height="3" fill="#445"/><rect x="11.5" y="8" width="3" height="3" fill="#556"/></svg>
<svg class="a" style="left:7px;top:268px;" width="16" height="16" viewBox="0 0 16 16"><path d="M4 5 L13 1.5 M4 5 Q2 10 5 12 L11 13" fill="none" stroke="#333" stroke-width="1.1"/><rect x="2.5" y="3.5" width="3" height="3" fill="#445"/><rect x="11.5" y="0.5" width="3" height="3" fill="#445"/><rect x="0.5" y="9.5" width="3" height="3" fill="#445"/><rect x="10.5" y="11.5" width="3" height="3" fill="#445"/></svg>
<svg class="a" style="left:7px;top:289px;" width="16" height="16" viewBox="0 0 16 16"><rect x="2.5" y="3.5" width="11" height="10" fill="#d8e8fc" stroke="#1c3c8c" stroke-width="1.1"/></svg>
<svg class="a" style="left:7px;top:310px;" width="16" height="16" viewBox="0 0 16 16"><ellipse cx="8" cy="9" rx="7" ry="4.5" fill="#d8e8fc" stroke="#1c3c8c" stroke-width="1.1"/></svg>
<svg class="a" style="left:7px;top:331px;" width="16" height="16" viewBox="0 0 16 16"><path d="M2 2 L6 13 L9 6 L12 13 L15 2" fill="none" stroke="#c4c4c4" stroke-width="2"/><g fill="#b0b0b0"><circle cx="2" cy="2" r="1.5"/><circle cx="9" cy="6" r="1.5"/><circle cx="15" cy="2" r="1.5"/></g></svg>
<div class="a" style="left:7px;top:353px;width:20px;height:2px;border-top:1px solid #b8b8b8;border-bottom:1px solid #fff"></div>
<svg class="a" style="left:7px;top:361px;" width="16" height="16" viewBox="0 0 16 16"><path d="M3 2 V6 H11 V13 H15" fill="none" stroke="#108a20" stroke-width="1.3"/><path d="M1 2 H5 M2 0 L3 3 L4 0 M12 12 V15 M14 12 V15" stroke="#409040" stroke-width=".8"/></svg>
<svg class="a" style="left:7px;top:382px;" width="16" height="16" viewBox="0 0 16 16"><path d="M3 3 L13 13" stroke="#108a20" stroke-width="1.3"/><path d="M1 2 H5 M2 0 L3 3 L4 0 M12 12 V15 M14 12 V15" stroke="#409040" stroke-width=".8"/><path d="M3 3 L6 3.5 L3.5 6Z M13 13 L10 12.5 L12.5 10Z" fill="#108a20"/></svg>
<svg class="a" style="left:7px;top:404px;" width="16" height="16" viewBox="0 0 16 16"><rect x="2.5" y="2.5" width="11" height="8" fill="#d8e8fc" stroke="#1c3c8c" stroke-width="1.1"/><path d="M6 8 L10 12 M10 8 L6 12" stroke="#1c3c8c" stroke-width="1.3"/></svg>
<svg class="a" style="left:7px;top:424px;" width="16" height="16" viewBox="0 0 16 16"><path d="M1 14 H15 V12 Q12 10 9.5 9.5 V6 Q11 4 8 1.5 Q5 4 6.5 6 V9.5 Q4 10 1 12Z" fill="#d08018" stroke="#8a5008" stroke-width=".8"/></svg>
<div class="a" style="left:7px;top:446px;width:20px;height:2px;border-top:1px solid #b8b8b8;border-bottom:1px solid #fff"></div>
<div class="a" style="left:8.5px;top:454.30px;font-size:15px;line-height:15px;white-space:pre;font-family:'Liberation Serif';font-weight:bold;color:#1c3c8c">A</div>
<svg class="a" style="left:8px;top:474px;" width="16" height="16" viewBox="0 0 16 16"><rect x="1.5" y="2.5" width="11" height="11" fill="#fff" stroke="#1c3c8c" stroke-width="1.1"/><path d="M4 5.5 H10 M4 8 H10 M4 10.5 H10" stroke="#1c3c8c" stroke-width="1"/></svg>
<div class="a" style="left:8px;top:496px;width:18px;height:3px;border-top:1px solid #fff;border-bottom:1px solid #b0b0b0;background:#e8e8e8"></div>
<svg class="a" style="left:7px;top:511px;" width="16" height="16" viewBox="0 0 16 16"><path d="M7 1 L1 14 H7Z M9 1 L15 14 H9Z" fill="#b0b0b0"/></svg>
<svg class="a" style="left:7px;top:531px;" width="16" height="16" viewBox="0 0 16 16"><path d="M1 2 L15 8 L1 14Z" fill="#b0b0b0"/><path d="M1 8 H15" stroke="#e4e4e4"/></svg>
<svg class="a" style="left:7px;top:551px;" width="16" height="16" viewBox="0 0 16 16"><path d="M2 14 H14 L8 2Z" fill="#b0b0b0"/><path d="M6 6 Q10 4 11 9" fill="none" stroke="#e8e8e8" stroke-width="1.2"/></svg>
<svg class="a" style="left:7px;top:570px;" width="16" height="16" viewBox="0 0 16 16"><path d="M2 14 H14 L8 2Z" fill="#b0b0b0"/><path d="M8 6 Q12 6 12 11" fill="none" stroke="#e8e8e8" stroke-width="1.2"/></svg>
<div class="a" style="left:7px;top:594px;width:20px;height:2px;border-top:1px solid #b8b8b8;border-bottom:1px solid #fff"></div>
<svg class="a" style="left:7px;top:602px;" width="16" height="16" viewBox="0 0 16 16"><path d="M2 2 H8 V5 H11 V8 H14 V14 H8 V11 H5 V8 H2Z" fill="#a8a8a8"/></svg>
<svg class="a" style="left:7px;top:622px;" width="16" height="16" viewBox="0 0 16 16"><path d="M2 2 H8 V5 H11 V8 H14 V14 H8 V11 H5 V8 H2Z" fill="#a8a8a8"/></svg>
<svg class="a" style="left:7px;top:641px;" width="16" height="16" viewBox="0 0 16 16"><path d="M1 1 H7 L9 4 H15 V15 H9 L7 12 H1Z" fill="#a8a8a8"/><path d="M2 10 L1 15 M14 1 L15 5" stroke="#c8c8c8"/></svg>
<svg class="a" style="left:7px;top:661px;" width="16" height="16" viewBox="0 0 16 16"><path d="M2 2 L8 4 L14 2 L12 8 L14 14 L8 12 L2 14 L4 8Z" fill="#a8a8a8"/></svg>
<div class="a" style="left:30px;top:143px;width:990px;height:18px;background:#e2e2e2"></div>
<div class="a" style="left:30px;top:143px;width:19px;height:670px;background:#e2e2e2"></div>
<div class="a" style="left:30px;top:160px;width:990px;height:1px;background:#101010"></div>
<div class="a" style="left:48px;top:143px;width:1px;height:670px;background:#101010"></div>
<div class="a" style="left:30px;top:143px;width:1px;height:670px;background:#a0a0a0"></div>
<div class="a" style="left:35px;top:147.69px;font-size:11px;line-height:11px;white-space:pre;">in</div>
<svg class="a" style="left:49px;top:143px;" width="971" height="18" viewBox="0 0 971 18"><g fill="#1a1a1a"><rect x="5" y="14" width="1" height="3"/><rect x="11" y="14" width="1" height="3"/><rect x="17" y="14" width="1" height="3"/><rect x="23" y="14" width="1" height="3"/><rect x="29" y="14" width="1" height="3"/><rect x="35" y="14" width="1" height="3"/><rect x="41" y="10" width="1" height="7"/><rect x="47" y="14" width="1" height="3"/><rect x="53" y="14" width="1" height="3"/><rect x="59" y="14" width="1" height="3"/><rect x="65" y="14" width="1" height="3"/><rect x="71" y="14" width="1" height="3"/><rect x="77" y="14" width="1" height="3"/><rect x="83" y="14" width="1" height="3"/><rect x="89" y="10" width="1" height="7"/><rect x="95" y="14" width="1" height="3"/><rect x="101" y="12" width="1" height="5"/><rect x="107" y="14" width="1" height="3"/><rect x="113" y="12" width="1" height="5"/><rect x="119" y="14" width="1" height="3"/><rect x="125" y="12" width="1" height="5"/><rect x="131" y="14" width="1" height="3"/><rect x="137" y="10" width="1" height="7"/><rect x="143" y="14" width="1" height="3"/><rect x="149" y="12" width="1" height="5"/><rect x="155" y="14" width="1" height="3"/><rect x="161" y="12" width="1" height="5"/><rect x="167" y="14" width="1" height="3"/><rect x="173" y="12" width="1" height="5"/><rect x="179" y="14" width="1" height="3"/><rect x="185" y="10" width="1" height="7"/><rect x="191" y="14" width="1" height="3"/><rect x="197" y="12" width="1" height="5"/><rect x="203" y="14" width="1" height="3"/><rect x="209" y="12" width="1" height="5"/><rect x="215" y="14" width="1" height="3"/><rect x="221" y="12" width="1" height="5"/><rect x="227" y="14" width="1" height="3"/><rect x="233" y="10" width="1" height="7"/><rect x="239" y="14" width="1" height="3"/><rect x="245" y="12" width="1" height="5"/><rect x="251" y="14" width="1" height="3"/><rect x="257" y="12" width="1" height="5"/><rect x="263" y="14" width="1" height="3"/><rect x="269" y="12" width="1" height="5"/><rect x="275" y="14" width="1" height="3"/><rect x="281" y="10" width="1" height="7"/><rect x="287" y="14" width="1" height="3"/><rect x="293" y="12" width="1" height="5"/><rect x="299" y="14" width="1" height="3"/><rect x="305" y="12" width="1" height="5"/><rect x="311" y="14" width="1" height="3"/><rect x="317" y="12" width="1" height="5"/><rect x="323" y="14" width="1" height="3"/><rect x="329" y="10" width="1" height="7"/><rect x="335" y="14" width="1" height="3"/><rect x="341" y="12" width="1" height="5"/><rect x="347" y="14" width="1" height="3"/><rect x="353" y="12" width="1" height="5"/><rect x="359" y="14" width="1" height="3"/><rect x="365" y="12" width="1" height="5"/><rect x="371" y="14" width="1" height="3"/><rect x="377" y="10" width="1" height="7"/><rect x="383" y="14" width="1" height="3"/><rect x="389" y="12" width="1" height="5"/><rect x="395" y="14" width="1" height="3"/><rect x="401" y="12" width="1" height="5"/><rect x="407" y="14" width="1" height="3"/><rect x="413" y="12" width="1" height="5"/><rect x="419" y="14" width="1" height="3"/><rect x="425" y="10" width="1" height="7"/><rect x="431" y="14" width="1" height="3"/><rect x="437" y="12" width="1" height="5"/><rect x="443" y="14" width="1" height="3"/><rect x="449" y="12" width="1" height="5"/><rect x="455" y="14" width="1" height="3"/><rect x="461" y="12" width="1" height="5"/><rect x="467" y="14" width="1" height="3"/><rect x="473" y="10" width="1" height="7"/><rect x="479" y="14" width="1" height="3"/><rect x="485" y="12" width="1" height="5"/><rect x="491" y="14" width="1" height="3"/><rect x="497" y="12" width="1" height="5"/><rect x="503" y="14" width="1" height="3"/><rect x="509" y="12" width="1" height="5"/><rect x="515" y="14" width="1" height="3"/><rect x="521" y="10" width="1" height="7"/><rect x="527" y="14" width="1" height="3"/><rect x="533" y="12" width="1" height="5"/><rect x="539" y="14" width="1" height="3"/><rect x="545" y="12" width="1" height="5"/><rect x="551" y="14" width="1" height="3"/><rect x="557" y="12" width="1" height="5"/><rect x="563" y="14" width="1" height="3"/><rect x="569" y="10" width="1" height="7"/><rect x="575" y="14" width="1" height="3"/><rect x="581" y="12" width="1" height="5"/><rect x="587" y="14" width="1" height="3"/><rect x="593" y="12" width="1" height="5"/><rect x="599" y="14" width="1" height="3"/><rect x="605" y="12" width="1" height="5"/><rect x="611" y="14" width="1" height="3"/><rect x="617" y="10" width="1" height="7"/><rect x="623" y="14" width="1" height="3"/><rect x="629" y="12" width="1" height="5"/><rect x="635" y="14" width="1" height="3"/><rect x="641" y="12" width="1" height="5"/><rect x="647" y="14" width="1" height="3"/><rect x="653" y="12" width="1" height="5"/><rect x="659" y="14" width="1" height="3"/><rect x="665" y="10" width="1" height="7"/><rect x="671" y="14" width="1" height="3"/><rect x="677" y="12" width="1" height="5"/><rect x="683" y="14" width="1" height="3"/><rect x="689" y="12" width="1" height="5"/><rect x="695" y="14" width="1" height="3"/><rect x="701" y="12" width="1" height="5"/><rect x="707" y="14" width="1" height="3"/><rect x="713" y="10" width="1" height="7"/><rect x="719" y="14" width="1" height="3"/><rect x="725" y="12" width="1" height="5"/><rect x="731" y="14" width="1" height="3"/><rect x="737" y="12" width="1" height="5"/><rect x="743" y="14" width="1" height="3"/><rect x="749" y="12" width="1" height="5"/><rect x="755" y="14" width="1" height="3"/><rect x="761" y="10" width="1" height="7"/><rect x="767" y="14" width="1" height="3"/><rect x="773" y="12" width="1" height="5"/><rect x="779" y="14" width="1" height="3"/><rect x="785" y="12" width="1" height="5"/><rect x="791" y="14" width="1" height="3"/><rect x="797" y="12" width="1" height="5"/><rect x="803" y="14" width="1" height="3"/><rect x="809" y="10" width="1" height="7"/><rect x="815" y="14" width="1" height="3"/><rect x="821" y="12" width="1" height="5"/><rect x="827" y="14" width="1" height="3"/><rect x="833" y="12" width="1" height="5"/><rect x="839" y="14" width="1" height="3"/><rect x="845" y="12" width="1" height="5"/><rect x="851" y="14" width="1" height="3"/><rect x="857" y="10" width="1" height="7"/><rect x="863" y="14" width="1" height="3"/><rect x="869" y="12" width="1" height="5"/><rect x="875" y="14" width="1" height="3"/><rect x="881" y="12" width="1" height="5"/><rect x="887" y="14" width="1" height="3"/><rect x="893" y="12" width="1" height="5"/><rect x="899" y="14" width="1" height="3"/><rect x="905" y="10" width="1" height="7"/><rect x="911" y="14" width="1" height="3"/><rect x="917" y="12" width="1" height="5"/><rect x="923" y="14" width="1" height="3"/><rect x="929" y="12" width="1" height="5"/><rect x="935" y="14" width="1" height="3"/><rect x="941" y="12" width="1" height="5"/><rect x="947" y="14" width="1" height="3"/><rect x="953" y="10" width="1" height="7"/><rect x="959" y="14" width="1" height="3"/><rect x="965" y="12" width="1" height="5"/></g></svg>
<div class="a" style="left:93px;top:146.38px;font-size:9px;line-height:9px;white-space:pre;color:#000">1/2</div>
<div class="a" style="left:189px;top:146.38px;font-size:9px;line-height:9px;white-space:pre;color:#000">1/2</div>
<div class="a" style="left:237px;top:146.38px;font-size:9px;line-height:9px;white-space:pre;color:#000">1</div>
<div class="a" style="left:285px;top:146.38px;font-size:9px;line-height:9px;white-space:pre;color:#000">1 1/2</div>
<div class="a" style="left:333px;top:146.38px;font-size:9px;line-height:9px;white-space:pre;color:#000">2</div>
<div class="a" style="left:381px;top:146.38px;font-size:9px;line-height:9px;white-space:pre;color:#000">2 1/2</div>
<div class="a" style="left:429px;top:146.38px;font-size:9px;line-height:9px;white-space:pre;color:#000">3</div>
<div class="a" style="left:477px;top:146.38px;font-size:9px;line-height:9px;white-space:pre;color:#000">3 1/2</div>
<div class="a" style="left:525px;top:146.38px;font-size:9px;line-height:9px;white-space:pre;color:#000">4</div>
<div class="a" style="left:573px;top:146.38px;font-size:9px;line-height:9px;white-space:pre;color:#000">4 1/2</div>
<div class="a" style="left:621px;top:146.38px;font-size:9px;line-height:9px;white-space:pre;color:#000">5</div>
<div class="a" style="left:669px;top:146.38px;font-size:9px;line-height:9px;white-space:pre;color:#000">5 1/2</div>
<div class="a" style="left:717px;top:146.38px;font-size:9px;line-height:9px;white-space:pre;color:#000">6</div>
<div class="a" style="left:765px;top:146.38px;font-size:9px;line-height:9px;white-space:pre;color:#000">6 1/2</div>
<div class="a" style="left:813px;top:146.38px;font-size:9px;line-height:9px;white-space:pre;color:#000">7</div>
<div class="a" style="left:861px;top:146.38px;font-size:9px;line-height:9px;white-space:pre;color:#000">7 1/2</div>
<div class="a" style="left:909px;top:146.38px;font-size:9px;line-height:9px;white-space:pre;color:#000">8</div>
<div class="a" style="left:957px;top:146.38px;font-size:9px;line-height:9px;white-space:pre;color:#000">8 1/2</div>
<div class="a" style="left:1005px;top:146.38px;font-size:9px;line-height:9px;white-space:pre;color:#000">9</div>
<svg class="a" style="left:30px;top:161px;" width="18" height="652" viewBox="0 0 18 652"><g fill="#1a1a1a"><rect x="14" y="4" width="4" height="1"/><rect x="16" y="10" width="2" height="1"/><rect x="14" y="16" width="4" height="1"/><rect x="16" y="22" width="2" height="1"/><rect x="14" y="28" width="4" height="1"/><rect x="16" y="34" width="2" height="1"/><rect x="11" y="40" width="7" height="1"/><rect x="16" y="46" width="2" height="1"/><rect x="14" y="52" width="4" height="1"/><rect x="16" y="58" width="2" height="1"/><rect x="14" y="64" width="4" height="1"/><rect x="16" y="70" width="2" height="1"/><rect x="14" y="76" width="4" height="1"/><rect x="16" y="82" width="2" height="1"/><rect x="11" y="88" width="7" height="1"/><rect x="16" y="94" width="2" height="1"/><rect x="14" y="100" width="4" height="1"/><rect x="16" y="106" width="2" height="1"/><rect x="14" y="112" width="4" height="1"/><rect x="16" y="118" width="2" height="1"/><rect x="14" y="124" width="4" height="1"/><rect x="16" y="130" width="2" height="1"/><rect x="11" y="136" width="7" height="1"/><rect x="16" y="142" width="2" height="1"/><rect x="14" y="148" width="4" height="1"/><rect x="16" y="154" width="2" height="1"/><rect x="14" y="160" width="4" height="1"/><rect x="16" y="166" width="2" height="1"/><rect x="14" y="172" width="4" height="1"/><rect x="16" y="178" width="2" height="1"/><rect x="11" y="184" width="7" height="1"/><rect x="16" y="190" width="2" height="1"/><rect x="14" y="196" width="4" height="1"/><rect x="16" y="202" width="2" height="1"/><rect x="14" y="208" width="4" height="1"/><rect x="16" y="214" width="2" height="1"/><rect x="14" y="220" width="4" height="1"/><rect x="16" y="226" width="2" height="1"/><rect x="11" y="232" width="7" height="1"/><rect x="16" y="238" width="2" height="1"/><rect x="14" y="244" width="4" height="1"/><rect x="16" y="250" width="2" height="1"/><rect x="14" y="256" width="4" height="1"/><rect x="16" y="262" width="2" height="1"/><rect x="14" y="268" width="4" height="1"/><rect x="16" y="274" width="2" height="1"/><rect x="11" y="280" width="7" height="1"/><rect x="16" y="286" width="2" height="1"/><rect x="14" y="292" width="4" height="1"/><rect x="16" y="298" width="2" height="1"/><rect x="14" y="304" width="4" height="1"/><rect x="16" y="310" width="2" height="1"/><rect x="14" y="316" width="4" height="1"/><rect x="16" y="322" width="2" height="1"/><rect x="11" y="328" width="7" height="1"/><rect x="16" y="334" width="2" height="1"/><rect x="14" y="340" width="4" height="1"/><rect x="16" y="346" width="2" height="1"/><rect x="14" y="352" width="4" height="1"/><rect x="16" y="358" width="2" height="1"/><rect x="14" y="364" width="4" height="1"/><rect x="16" y="370" width="2" height="1"/><rect x="11" y="376" width="7" height="1"/><rect x="16" y="382" width="2" height="1"/><rect x="14" y="388" width="4" height="1"/><rect x="16" y="394" width="2" height="1"/><rect x="14" y="400" width="4" height="1"/><rect x="16" y="406" width="2" height="1"/><rect x="14" y="412" width="4" height="1"/><rect x="16" y="418" width="2" height="1"/><rect x="11" y="424" width="7" height="1"/><rect x="16" y="430" width="2" height="1"/><rect x="14" y="436" width="4" height="1"/><rect x="16" y="442" width="2" height="1"/><rect x="14" y="448" width="4" height="1"/><rect x="16" y="454" width="2" height="1"/><rect x="14" y="460" width="4" height="1"/><rect x="16" y="466" width="2" height="1"/><rect x="11" y="472" width="7" height="1"/><rect x="16" y="478" width="2" height="1"/><rect x="14" y="484" width="4" height="1"/><rect x="16" y="490" width="2" height="1"/><rect x="14" y="496" width="4" height="1"/><rect x="16" y="502" width="2" height="1"/><rect x="14" y="508" width="4" height="1"/><rect x="16" y="514" width="2" height="1"/><rect x="11" y="520" width="7" height="1"/><rect x="16" y="526" width="2" height="1"/><rect x="14" y="532" width="4" height="1"/><rect x="16" y="538" width="2" height="1"/><rect x="14" y="544" width="4" height="1"/><rect x="16" y="550" width="2" height="1"/><rect x="14" y="556" width="4" height="1"/><rect x="16" y="562" width="2" height="1"/><rect x="11" y="568" width="7" height="1"/><rect x="16" y="574" width="2" height="1"/><rect x="14" y="580" width="4" height="1"/><rect x="16" y="586" width="2" height="1"/><rect x="14" y="592" width="4" height="1"/><rect x="16" y="598" width="2" height="1"/><rect x="14" y="604" width="4" height="1"/><rect x="16" y="610" width="2" height="1"/><rect x="11" y="616" width="7" height="1"/><rect x="16" y="622" width="2" height="1"/><rect x="14" y="628" width="4" height="1"/><rect x="16" y="634" width="2" height="1"/><rect x="14" y="640" width="4" height="1"/><rect x="16" y="646" width="2" height="1"/></g></svg>
<div class="a" style="left:34.5px;top:201px;width:0;height:0"><div style="position:absolute;left:0;top:0;transform:rotate(-90deg);transform-origin:0 0;font-size:9px;line-height:9px;white-space:pre">1/2</div></div>
<div class="a" style="left:34.5px;top:249px;width:0;height:0"><div style="position:absolute;left:0;top:0;transform:rotate(-90deg);transform-origin:0 0;font-size:9px;line-height:9px;white-space:pre">1</div></div>
<div class="a" style="left:34.5px;top:297px;width:0;height:0"><div style="position:absolute;left:0;top:0;transform:rotate(-90deg);transform-origin:0 0;font-size:9px;line-height:9px;white-space:pre">1 1/2</div></div>
<div class="a" style="left:34.5px;top:345px;width:0;height:0"><div style="position:absolute;left:0;top:0;transform:rotate(-90deg);transform-origin:0 0;font-size:9px;line-height:9px;white-space:pre">2</div></div>
<div class="a" style="left:34.5px;top:393px;width:0;height:0"><div style="position:absolute;left:0;top:0;transform:rotate(-90deg);transform-origin:0 0;font-size:9px;line-height:9px;white-space:pre">2 1/2</div></div>
<div class="a" style="left:34.5px;top:441px;width:0;height:0"><div style="position:absolute;left:0;top:0;transform:rotate(-90deg);transform-origin:0 0;font-size:9px;line-height:9px;white-space:pre">3</div></div>
<div class="a" style="left:34.5px;top:489px;width:0;height:0"><div style="position:absolute;left:0;top:0;transform:rotate(-90deg);transform-origin:0 0;font-size:9px;line-height:9px;white-space:pre">3 1/2</div></div>
<div class="a" style="left:34.5px;top:537px;width:0;height:0"><div style="position:absolute;left:0;top:0;transform:rotate(-90deg);transform-origin:0 0;font-size:9px;line-height:9px;white-space:pre">4</div></div>
<div class="a" style="left:34.5px;top:585px;width:0;height:0"><div style="position:absolute;left:0;top:0;transform:rotate(-90deg);transform-origin:0 0;font-size:9px;line-height:9px;white-space:pre">4 1/2</div></div>
<div class="a" style="left:34.5px;top:633px;width:0;height:0"><div style="position:absolute;left:0;top:0;transform:rotate(-90deg);transform-origin:0 0;font-size:9px;line-height:9px;white-space:pre">5</div></div>
<div class="a" style="left:34.5px;top:681px;width:0;height:0"><div style="position:absolute;left:0;top:0;transform:rotate(-90deg);transform-origin:0 0;font-size:9px;line-height:9px;white-space:pre">5 1/2</div></div>
<div class="a" style="left:34.5px;top:729px;width:0;height:0"><div style="position:absolute;left:0;top:0;transform:rotate(-90deg);transform-origin:0 0;font-size:9px;line-height:9px;white-space:pre">6</div></div>
<div class="a" style="left:34.5px;top:777px;width:0;height:0"><div style="position:absolute;left:0;top:0;transform:rotate(-90deg);transform-origin:0 0;font-size:9px;line-height:9px;white-space:pre">6 1/2</div></div>
<div class="a" style="left:224px;top:144px;width:1px;height:16px;background:#d04040"></div>
<div class="a" style="left:32px;top:163px;width:16px;height:1px;background:#c04040"></div>
<div class="a" style="left:49px;top:161px;width:971px;height:652px;background:#808080"></div>
<div class="a" style="left:139px;top:161px;width:792px;height:652px;background:#fff"></div>
<div class="a" style="left:138px;top:161px;width:1px;height:652px;background:#000"></div>
<div class="a" style="left:931px;top:249px;width:3px;height:564px;background:#000"></div>
<div class="a" style="left:139px;top:161px;width:816px;height:88px;background:linear-gradient(90deg,#2189a4 0,#2284a5 40%,#2474a6 80%,#2a6ea6 100%)"></div>
<div class="a" style="left:180.5px;top:190.20px;font-size:29.3px;line-height:29.3px;white-space:pre;color:#fff;font-weight:bold;font-style:italic">Synthesis from N-replaced pyrrols</div>
<svg class="a" style="left:48px;top:161px;overflow:hidden" width="972" height="652" viewBox="48 161 972 652"><polyline points="252.5,416.4 238.2,409.6 238.2,369.2 309,369.2 309,409.6 295.2,416.4" fill="none" stroke="#1f6f9a" stroke-width="1.7" stroke-linejoin="miter"/><line x1="243.4" y1="370" x2="243.4" y2="408" stroke="#1f6f9a" stroke-width="1.7"/><line x1="303.6" y1="370" x2="303.6" y2="408" stroke="#1f6f9a" stroke-width="1.7"/><line x1="273.5" y1="440.5" x2="273.5" y2="470.6" stroke="#1f6f9a" stroke-width="1.7"/><text x="277.5" y="484.8" font-family="Liberation Sans" font-weight="bold" font-size="13" fill="#000">CO<tspan font-size="8" dy="1">2</tspan><tspan dy="-1">Me</tspan></text><line x1="328.3" y1="389.8" x2="424.3" y2="389.8" stroke="#808080" stroke-width="2"/><path d="M434.3 389.8 L420.8 396.6 L424.3 389.8 L420.8 383.0Z" fill="#808080"/><text x="371" y="381.9" font-family="Liberation Sans" font-weight="bold" font-size="12" fill="#000">O<tspan font-size="8" dy="0">2</tspan></text><polyline points="472.1,416.5 457.9,410.3 457.9,369.2 529.7,369.2 529.7,410.3 516.6,416.5" fill="none" stroke="#1f6f9a" stroke-width="1.7" stroke-linejoin="miter"/><line x1="464" y1="370" x2="464" y2="407.7" stroke="#1f6f9a" stroke-width="1.7"/><line x1="524" y1="370" x2="524" y2="407.7" stroke="#1f6f9a" stroke-width="1.7"/><line x1="457.9" y1="410.3" x2="421.8" y2="486.5" stroke="#1f6f9a" stroke-width="1.7"/><line x1="529.7" y1="410.3" x2="567.4" y2="486.5" stroke="#1f6f9a" stroke-width="1.7"/><line x1="426.6" y1="495.7" x2="561.9" y2="495.7" stroke="#1f6f9a" stroke-width="1.7"/><line x1="494.5" y1="439.9" x2="494.5" y2="467.7" stroke="#1f6f9a" stroke-width="1.7"/><text x="498.5" y="483" font-family="Liberation Sans" font-weight="bold" font-size="13" fill="#000">CO<tspan font-size="8" dy="1">2</tspan><tspan dy="-1">Me</tspan></text><text x="412.5" y="499.5" font-family="Liberation Sans" font-weight="bold" font-size="12" fill="#000">O</text><text x="566.5" y="499.5" font-family="Liberation Sans" font-weight="bold" font-size="12" fill="#000">O</text><line x1="552" y1="390" x2="648.4" y2="390.0" stroke="#808080" stroke-width="2"/><path d="M658.4 390.0 L644.9 396.8 L648.4 390.0 L644.9 383.2Z" fill="#808080"/><text x="585.5" y="381.9" font-family="Liberation Sans" font-weight="bold" font-size="12" fill="#000">Sn<tspan dx="2">Cl</tspan><tspan font-size="8" dy="0">2</tspan></text><polyline points="713,416.2 699.1,410.3 699.1,369.8 770.6,369.8 770.6,410.3 757.2,416.2" fill="none" stroke="#1f6f9a" stroke-width="1.7" stroke-linejoin="miter"/><line x1="705.3" y1="371" x2="705.3" y2="408" stroke="#1f6f9a" stroke-width="1.7"/><line x1="764" y1="371" x2="764" y2="408" stroke="#1f6f9a" stroke-width="1.7"/><line x1="699.1" y1="410.3" x2="662.7" y2="487" stroke="#1f6f9a" stroke-width="1.7"/><line x1="770.6" y1="410.3" x2="810" y2="487" stroke="#1f6f9a" stroke-width="1.7"/><line x1="667.4" y1="499.3" x2="722.3" y2="512.2" stroke="#1f6f9a" stroke-width="1.7"/><line x1="805.4" y1="499.3" x2="742.2" y2="512.7" stroke="#1f6f9a" stroke-width="1.7"/><line x1="723.4" y1="521.2" x2="686.7" y2="541.9" stroke="#1f6f9a" stroke-width="1.7"/><line x1="743" y1="521.2" x2="785.3" y2="541.9" stroke="#1f6f9a" stroke-width="1.7"/><line x1="734.5" y1="434" x2="734.5" y2="471.5" stroke="#1f6f9a" stroke-width="1.7"/><text x="738.5" y="485.6" font-family="Liberation Sans" font-weight="bold" font-size="13" fill="#000">CO<tspan font-size="8" dy="1">2</tspan><tspan dy="-1">Me</tspan></text><text x="653.5" y="500" font-family="Liberation Sans" font-weight="bold" font-size="12" fill="#000">O</text><text x="809" y="500" font-family="Liberation Sans" font-weight="bold" font-size="12" fill="#000">O</text><text x="725" y="520" font-family="Liberation Sans" font-weight="bold" font-size="13" fill="#000">Sn</text><text x="671.5" y="551" font-family="Liberation Sans" font-weight="bold" font-size="13" fill="#000">Cl</text><text x="786.5" y="551" font-family="Liberation Sans" font-weight="bold" font-size="13" fill="#000">Cl</text><line x1="810" y1="390" x2="860.0" y2="390.0" stroke="#808080" stroke-width="2"/><path d="M870.0 390.0 L856.5 396.8 L860.0 390.0 L856.5 383.2Z" fill="#808080"/><polyline points="231.3,630.6 266.5,610.9 301.6,630.6 337.3,610.9 372.9,630.6" fill="none" stroke="#6e2382" stroke-width="1.7" stroke-linejoin="miter"/><line x1="267" y1="615.6" x2="297" y2="632.5" stroke="#6e2382" stroke-width="1.7"/><line x1="338.6" y1="615.6" x2="368.2" y2="632.5" stroke="#6e2382" stroke-width="1.7"/><text x="380.5" y="632.9" font-family="Liberation Sans" font-weight="bold" font-size="13" fill="#000">OSiMe<tspan font-size="8" dy="1">3</tspan></text><line x1="227.9" y1="640.4" x2="438.0" y2="640.4" stroke="#808080" stroke-width="2"/><path d="M448.0 640.4 L434.5 647.2 L438.0 640.4 L434.5 633.6Z" fill="#808080"/><text x="364.5" y="702" font-family="Liberation Sans" font-weight="bold" font-size="13" fill="#000">RMgX</text><line x1="449" y1="670.5" x2="394.7625523614697" y2="741.6472986435779" stroke="#808080" stroke-width="2"/><path d="M388.7 749.6 L391.5 734.7 L394.8 741.6 L402.3 743.0Z" fill="#808080"/><line x1="477.7" y1="606.9" x2="453.6" y2="620" stroke="#6e2382" stroke-width="1.7"/><polyline points="453.6,620 453.6,661.2 489.9,680.2 524.3,661.2" fill="none" stroke="#6e2382" stroke-width="1.7" stroke-linejoin="miter"/><line x1="460.1" y1="623.3" x2="460.1" y2="657.2" stroke="#6e2382" stroke-width="1.7"/><polyline points="550.5,674.8 524.3,661.2 524.3,620 595,620 595,661.2 568,674.8" fill="none" stroke="#6e2382" stroke-width="1.7" stroke-linejoin="miter"/><line x1="530.2" y1="625.5" x2="590" y2="625.5" stroke="#6e2382" stroke-width="1.7"/><line x1="559.3" y1="694.5" x2="559.3" y2="714.2" stroke="#6e2382" stroke-width="1.7"/><line x1="595" y1="661.2" x2="616.9" y2="670.4" stroke="#6e2382" stroke-width="1.7"/><line x1="633.7" y1="679.1" x2="649.7" y2="686.1" stroke="#6e2382" stroke-width="1.7"/><line x1="666.6" y1="684.6" x2="680.4" y2="676.5" stroke="#6e2382" stroke-width="1.7"/><line x1="655.6" y1="697.7" x2="645.8" y2="725.1" stroke="#6e2382" stroke-width="1.7"/><line x1="664.4" y1="697.7" x2="680.8" y2="722.9" stroke="#6e2382" stroke-width="1.7"/><text x="479" y="605.1" font-family="Liberation Sans" font-weight="bold" font-size="13" fill="#000">COH</text><text x="554" y="684.6" font-family="Liberation Sans" font-weight="bold" font-size="13" fill="#000">N</text><text x="563.5" y="731" font-family="Liberation Sans" font-weight="bold" font-size="13" fill="#000">CO<tspan font-size="8" dy="1">2</tspan><tspan dy="-1">Me</tspan></text><text x="620.3" y="678.7" font-family="Liberation Sans" font-weight="bold" font-size="12" fill="#000">O</text><text x="649.5" y="694" font-family="Liberation Sans" font-weight="bold" font-size="13" fill="#000">Sn</text><text x="681.5" y="675.8" font-family="Liberation Sans" font-weight="bold" font-size="12" fill="#000">O<tspan font-size="8" dy="-5">-</tspan></text><text x="633.5" y="740.4" font-family="Liberation Sans" font-weight="bold" font-size="13" fill="#000">Cl</text><text x="678.5" y="736" font-family="Liberation Sans" font-weight="bold" font-size="13" fill="#000">Cl</text><line x1="668.8" y1="640.2" x2="698.8" y2="640.2" stroke="#808080" stroke-width="2"/><path d="M708.8 640.2 L695.3 647.0 L698.8 640.2 L695.3 633.4Z" fill="#808080"/><line x1="743.8" y1="606.9" x2="719.5" y2="620.3" stroke="#6e2382" stroke-width="1.7"/><polyline points="719.5,620.3 719.5,660.4 754.7,679.9 790.5,660.4" fill="none" stroke="#6e2382" stroke-width="1.7" stroke-linejoin="miter"/><line x1="726.3" y1="624.4" x2="726.3" y2="657.5" stroke="#6e2382" stroke-width="1.7"/><polyline points="818,676.2 790.5,660.4 790.5,620.3 860.6,620.3 860.6,660.4 833.8,676.2" fill="none" stroke="#6e2382" stroke-width="1.7" stroke-linejoin="miter"/><line x1="796.1" y1="623.9" x2="796.1" y2="657.5" stroke="#6e2382" stroke-width="1.7"/><line x1="854.5" y1="624" x2="854.5" y2="657" stroke="#6e2382" stroke-width="1.7"/><line x1="825.8" y1="690.8" x2="825.8" y2="716.4" stroke="#6e2382" stroke-width="1.7"/><text x="745.5" y="605" font-family="Liberation Sans" font-weight="bold" font-size="13" fill="#000">COH</text><text x="820" y="684.8" font-family="Liberation Sans" font-weight="bold" font-size="13" fill="#000">N</text><text x="829.5" y="733.9" font-family="Liberation Sans" font-weight="bold" font-size="13" fill="#000">CO<tspan font-size="8" dy="1">2</tspan><tspan dy="-1">Me</tspan></text><line x1="779.8" y1="699.4" x2="779.8" y2="779.4" stroke="#808080" stroke-width="2"/><path d="M779.8 789.4 L773.0 775.9 L779.8 779.4 L786.6 775.9Z" fill="#808080"/><text x="728" y="746.8" font-family="Liberation Sans" font-weight="bold" font-size="12" fill="#000">Sn<tspan dx="1.5">Cl</tspan><tspan font-size="9">4</tspan></text><text x="732.5" y="762.6" font-family="Liberation Sans" font-weight="bold" font-size="12" fill="#000">-O<tspan dx="1.5">H</tspan></text><line x1="275.3" y1="777.2" x2="294.3" y2="800.2" stroke="#7d8a30" stroke-width="1.7"/><line x1="330.5" y1="775.8" x2="310.9" y2="800.2" stroke="#7d8a30" stroke-width="1.7"/><text x="264.2" y="774" font-family="Liberation Sans" font-weight="bold" font-size="13" fill="#000">R</text><text x="328.5" y="770.7" font-family="Liberation Sans" font-weight="bold" font-size="13" fill="#000">OH</text><text x="293.8" y="814.2" font-family="Liberation Sans" font-weight="bold" font-size="13" fill="#000">CH</text><path d="M660 813 L664.5 809.5 L669 813" fill="none" stroke="#b06020" stroke-width="1.5"/>
<defs>
<linearGradient id="glass" x1="0" x2="1"><stop offset="0" stop-color="#dfe8fb"/><stop offset=".5" stop-color="#c8d6f8"/><stop offset="1" stop-color="#b8c8f4"/></linearGradient>
<linearGradient id="blueliq" x1="0" x2="1"><stop offset="0" stop-color="#90aafc"/><stop offset=".5" stop-color="#7896f4"/><stop offset="1" stop-color="#6282f0"/></linearGradient>
<linearGradient id="greenliq" x1="0" x2="1"><stop offset="0" stop-color="#78e070"/><stop offset=".15" stop-color="#58d458"/><stop offset=".7" stop-color="#3cc83c"/><stop offset=".9" stop-color="#28b828"/><stop offset="1" stop-color="#20b020"/></linearGradient>
<linearGradient id="orliq" x1="0" x2="1"><stop offset="0" stop-color="#ffc830"/><stop offset=".4" stop-color="#ffa800"/><stop offset=".8" stop-color="#ffb000"/><stop offset="1" stop-color="#ffe040"/></linearGradient>
</defs>
<!-- round flask -->
<clipPath id="rfc"><circle cx="746" cy="259.5" r="34"/></clipPath>
<path d="M735 194 V224 A38.5 38.5 0 1 0 757 224 V194Z" fill="#c4d4fa" stroke="#9ab8f0" stroke-width="1.2"/>
<path d="M737 196 V226" stroke="#eef4ff" stroke-width="2.5"/>
<rect x="700" y="241" width="90" height="60" fill="url(#blueliq)" clip-path="url(#rfc)"/>
<path d="M714 250 A33 33 0 0 0 744 293" fill="none" stroke="#e8f0ff" stroke-width="2.5" opacity=".9"/>
<path d="M758 226 A34 34 0 0 1 775 240" fill="none" stroke="#eef4ff" stroke-width="2" opacity=".8"/>
<rect x="732.5" y="191.5" width="27" height="3.8" rx="1.5" fill="#e6f0fc" stroke="#b0d0f4" stroke-width=".8"/>
<!-- side arm -->
<rect x="826" y="203.5" width="30" height="5" fill="#c8d8f8"/>
<circle cx="835.6" cy="206.3" r="3.6" fill="#d8e6fc" stroke="#a8c4f0" stroke-width=".6"/>
<circle cx="844.2" cy="206.3" r="3.6" fill="#d8e6fc" stroke="#a8c4f0" stroke-width=".6"/>
<circle cx="852.9" cy="206.3" r="3.6" fill="#d8e6fc" stroke="#a8c4f0" stroke-width=".6"/>
<!-- green erlenmeyer -->
<clipPath id="gfc"><path d="M797.5 176 V213 L765 314 Q763 324 772 324.5 H852 Q861 324 859 314 L826.5 213 V176Z"/></clipPath>
<path d="M797.5 176 V213 L765 314 Q763 324 772 324.5 H852 Q861 324 859 314 L826.5 213 V176Z" fill="url(#glass)" stroke="#a8c4f0" stroke-width="1.2"/>
<rect x="760" y="250.5" width="104" height="80" fill="url(#greenliq)" clip-path="url(#gfc)"/>
<path d="M788 265 L776 300" stroke="#b8f0a8" stroke-width="2" opacity=".8"/>
<path d="M831 256 L851 312" stroke="#8af088" stroke-width="2.5" opacity=".75"/>
<path d="M803 180 V245" stroke="#fff" stroke-width="2" opacity=".6"/><path d="M820 180 V240 L826 252" fill="none" stroke="#fff" stroke-width="1.5" opacity=".5"/><path d="M770 318 Q812 314 855 318" fill="none" stroke="#a8f0a0" stroke-width="2" opacity=".7"/>
<rect x="794" y="170.8" width="36" height="5.8" rx="2" fill="#e0ecfc" stroke="#a8c4f0" stroke-width=".8"/>
<!-- orange erlenmeyer -->
<clipPath id="ofc"><path d="M868.5 209 V240 L856 274 Q854 281.5 862 281.5 H906 Q914 281.5 912 274 L899 240 V209Z"/></clipPath>
<path d="M868.5 209 V240 L856 274 Q854 281.5 862 281.5 H906 Q914 281.5 912 274 L899 240 V209Z" fill="url(#glass)" stroke="#a8c4f0" stroke-width="1.2"/>
<rect x="850" y="245" width="70" height="40" fill="url(#orliq)" clip-path="url(#ofc)"/>
<path d="M860 276 H906" stroke="#ffe080" stroke-width="1.5" opacity=".8"/>
<path d="M873 212 V238" stroke="#fff" stroke-width="2" opacity=".6"/>
<rect x="866" y="204.8" width="35" height="4.5" rx="1.5" fill="#e0ecfc" stroke="#a8c4f0" stroke-width=".8"/>
<defs><pattern id="dots" width="3" height="3" patternUnits="userSpaceOnUse" x="572" y="230"><rect x="1" y="1" width="2" height="2" fill="#333" opacity=".55"/><rect x="0.5" y="0.5" width="2" height="2" fill="#e8f6ff" opacity=".75"/></pattern></defs><text x="572.5" y="254.5" font-family="Liberation Sans" font-weight="bold" font-size="33" fill="url(#dots)" stroke="url(#dots)" stroke-width="3" textLength="70" lengthAdjust="spacingAndGlyphs">SOFT</text><text x="646.8" y="255.3" font-family="Liberation Sans" font-size="33" fill="none" stroke="#222" stroke-opacity=".5" stroke-width="1" textLength="111" lengthAdjust="spacingAndGlyphs">PORTAL</text><text x="646" y="254.5" font-family="Liberation Sans" font-size="33" fill="#fff" fill-opacity=".5" stroke="#fff" stroke-opacity=".4" stroke-width="1" textLength="111" lengthAdjust="spacingAndGlyphs">PORTAL</text><text x="617" y="268" font-family="Liberation Sans" font-size="11" fill="#7a7a7a" textLength="97" lengthAdjust="spacingAndGlyphs">www.softportal.com</text></svg>
<div class="a" style="left:85px;top:147px;width:68px;height:17px;background:#ffffe1;border:1px solid #000;box-shadow:1px 1px 0 #555"></div>
<div class="a" style="left:87.5px;top:150.19px;font-size:11px;line-height:11px;white-space:pre;letter-spacing:-0.35px">Close Library</div>
<div class="a" style="left:1020px;top:143px;width:22px;height:690px;background:#e1e1e1"></div>
<div class="a" style="left:1020px;top:143px;width:16px;height:670px;background:linear-gradient(90deg,#eeeeee,#fafafa 60%,#f6f6f6)"></div>
<div class="a" style="left:1036px;top:143px;width:2px;height:670px;background:#e8e8e8"></div>
<div class="a" style="left:1021px;top:144px;width:15px;height:16px;background:linear-gradient(#fafafa,#dcdcdc);border:1px solid #b0b0b0"></div>
<svg class="a" style="left:1024px;top:148px;" width="10" height="8" viewBox="0 0 10 8"><path d="M1.5 6 L5 2.5 L8.5 6" fill="none" stroke="#555" stroke-width="2"/></svg>
<div class="a" style="left:1021px;top:175px;width:16px;height:357px;background:linear-gradient(90deg,#fdfdfd,#e6e6e6);border:1px solid #8c8c8c"></div>
<svg class="a" style="left:1025px;top:350px;" width="8" height="8" viewBox="0 0 8 8"><path d="M1 1.5 H7 M1 3.5 H7 M1 5.5 H7" stroke="#777" stroke-width="1"/></svg>
<div class="a" style="left:1021px;top:796px;width:15px;height:16px;background:linear-gradient(#fafafa,#dcdcdc);border:1px solid #b0b0b0"></div>
<svg class="a" style="left:1024px;top:801px;" width="10" height="8" viewBox="0 0 10 8"><path d="M1.5 2 L5 5.5 L8.5 2" fill="none" stroke="#555" stroke-width="2"/></svg>
<div class="a" style="left:48px;top:813px;width:972px;height:20px;background:#ececec"></div>
<div class="a" style="left:49px;top:815px;width:34px;height:17px;background:#f4f4f4"></div>
<svg class="a" style="left:52px;top:817px;" width="30" height="12" viewBox="0 0 30 12"><path d="M9 3 L6 6 L9 9 M21 3 L24 6 L21 9" fill="none" stroke="#c0c0c0" stroke-width="1.3"/></svg>
<div class="combo" style="left:85px;top:815px;width:148px;height:18px;border-color:#a8a8a8"></div>
<div class="cbtn" style="left:232px;top:815px;width:16px;height:18px"></div>
<svg class="a" style="left:235px;top:820px;" width="10" height="8" viewBox="0 0 10 8"><path d="M1.5 1.5 L5 5 L8.5 1.5" fill="none" stroke="#333" stroke-width="2"/></svg>
<div class="a" style="left:89px;top:818.69px;font-size:11px;line-height:11px;white-space:pre;">Page1</div>
<div class="a" style="left:249px;top:816px;width:16px;height:16px;background:linear-gradient(#fafafa,#dcdcdc);border:1px solid #b0b0b0"></div>
<svg class="a" style="left:253px;top:820px;" width="8" height="10" viewBox="0 0 8 10"><path d="M5.5 1.5 L2 5 L5.5 8.5" fill="none" stroke="#555" stroke-width="2"/></svg>
<div class="a" style="left:267px;top:816px;width:729px;height:16px;background:linear-gradient(#fdfdfd,#e0e0e0);border:1px solid #a0a0a0"></div>
<svg class="a" style="left:627px;top:820px;" width="8" height="8" viewBox="0 0 8 8"><path d="M1.5 1 V7 M3.5 1 V7 M5.5 1 V7" stroke="#777" stroke-width="1"/></svg>
<div class="a" style="left:1004px;top:816px;width:16px;height:16px;background:linear-gradient(#fafafa,#dcdcdc);border:1px solid #b0b0b0"></div>
<svg class="a" style="left:1008px;top:820px;" width="8" height="10" viewBox="0 0 8 10"><path d="M2.5 1.5 L6 5 L2.5 8.5" fill="none" stroke="#555" stroke-width="2"/></svg>
<div class="a" style="left:31px;top:813px;width:18px;height:20px;background:#ededed"></div>
<div class="a" style="left:29px;top:143px;width:1px;height:690px;background:#a4a4a4"></div>
<div class="a" style="left:30px;top:143px;width:1px;height:690px;background:#f4f4f4"></div>
<div class="a" style="left:4px;top:833px;width:1036px;height:1px;background:#fff"></div>
<div class="a" style="left:1040px;top:142px;width:236px;height:691px;background:#e1e1e1"></div>
<div class="a" style="left:1042px;top:142px;width:1px;height:691px;background:#b8b8b8"></div>
<div class="a" style="left:1043px;top:142px;width:1px;height:691px;background:#fff"></div>
<div class="a" style="left:1050px;top:150px;width:188px;height:3px;border-top:1px solid #b4b4b4;border-bottom:1px solid #fff;border-left:1px solid #b4b4b4;border-right:1px solid #fff;border-radius:1px"></div>
<svg class="a" style="left:1246px;top:147px;" width="8" height="6" viewBox="0 0 8 6"><path d="M1 5 L4 1.5 L7 5Z" fill="#c8c8c8"/></svg>
<svg class="a" style="left:1261px;top:148px;" width="10" height="9" viewBox="0 0 10 9"><path d="M1.5 1.5 L8 7.5 M8 1.5 L1.5 7.5" stroke="#000" stroke-width="2"/></svg>
<div class="a" style="left:1048px;top:183px;width:222px;height:224px;background:#f9f9f9;border:1px solid #a8a8a8;border-top-color:#c8c8c8"></div>
<div class="a" style="left:1051px;top:166px;width:44px;height:18px;background:linear-gradient(#fdfdfd,#e6e6e6);border:1px solid #a8a8a8;border-bottom:none;border-radius:3px 3px 0 0"></div>
<div class="a" style="left:1096px;top:166px;width:53px;height:18px;background:linear-gradient(#fdfdfd,#e6e6e6);border:1px solid #a8a8a8;border-bottom:none;border-radius:3px 3px 0 0"></div>
<div class="a" style="left:1216px;top:166px;width:23px;height:18px;background:linear-gradient(#fdfdfd,#e6e6e6);border:1px solid #a8a8a8;border-bottom:none;border-radius:3px 3px 0 0"></div>
<div class="a" style="left:1149px;top:163px;width:68px;height:21px;background:#fbfbfb;border:1px solid #a8a8a8;border-bottom:none;border-top:3px solid #f0a830;border-radius:3px 3px 0 0"></div>
<div class="a" style="left:1150px;top:183px;width:66px;height:2px;background:#fbfbfb"></div>
<svg class="a" style="left:1056px;top:167px;" width="16" height="16" viewBox="0 0 16 16"><path d="M2 8 L8 3 L13 9 L7 14Z" fill="#e8eef8" stroke="#1c3c8c" stroke-width="1.1"/><path d="M4 9 L10 5.5 L12 9 L7 12.5Z" fill="#6080d0"/><path d="M5 5 Q5 1 8 1.5 Q10 2 9.5 5" fill="none" stroke="#1c3c8c" stroke-width="1"/><path d="M12 9 H15 V16" fill="none" stroke="#c01818" stroke-width="2.2"/></svg>
<div class="a" style="left:1078px;top:169.69px;font-size:11px;line-height:11px;white-space:pre;">Fill</div>
<svg class="a" style="left:1101px;top:167px;" width="18" height="16" viewBox="0 0 18 16"><path d="M1 1 L12 10" stroke="#333" stroke-width="2"/><path d="M10 8.5 L15 12 L12.5 7Z" fill="#b03010"/><path d="M2 15 H17" stroke="#e86010" stroke-width="2.2"/></svg>
<div class="a" style="left:1124px;top:170.19px;font-size:11px;line-height:11px;white-space:pre;">Line</div>
<svg class="a" style="left:1155px;top:166px;" width="18" height="16" viewBox="0 0 18 16"><path d="M1 13 L6 10 H18 L13 13Z" fill="#2868d8"/><path d="M1 10 L6 7 H18 L13 10Z" fill="#e8a820"/><path d="M1 7 L6 4 H18 L13 7Z" fill="#30b030"/><path d="M1 4.5 L6 1.5 H18 L13 4.5Z" fill="#48c048"/></svg>
<div class="a" style="left:1178px;top:168.69px;font-size:11px;line-height:11px;white-space:pre;letter-spacing:-0.2px">Layers</div>
<svg class="a" style="left:1220px;top:167px;" width="16" height="16" viewBox="0 0 16 16"><path d="M4.5 8 V5.5 A3.5 3.5 0 0 1 11.5 5.5 V8" fill="none" stroke="#6a5aa8" stroke-width="1.6"/><rect x="2.5" y="7.5" width="11" height="8" rx="2" fill="#c8b8f0" stroke="#6a5aa8"/><path d="M8 10 V13" stroke="#4a3a98" stroke-width="1.5"/></svg>
<div class="a" style="left:1240px;top:165px;width:15px;height:15px;background:linear-gradient(#fdfdfd,#e0e0e0);border:1px solid #a8a8a8"></div>
<div class="a" style="left:1255px;top:165px;width:15px;height:15px;background:linear-gradient(#fdfdfd,#e0e0e0);border:1px solid #a8a8a8"></div>
<svg class="a" style="left:1244px;top:168px;" width="8" height="9" viewBox="0 0 8 9"><path d="M5 1 L1.5 4.5 L5 8Z" fill="#000"/></svg>
<svg class="a" style="left:1259px;top:168px;" width="8" height="9" viewBox="0 0 8 9"><path d="M2.5 1 L6 4.5 L2.5 8Z" fill="#000"/></svg>
<div class="a" style="left:1058px;top:188px;width:201px;height:164px;background:#fff;border:1px solid #a0a0a0"></div>
<div class="a" style="left:1059px;top:189px;width:199px;height:21px;background:#e4e4e4"></div>
<div class="a" style="left:1121px;top:191px;width:1px;height:17px;background:#c4c4c4"></div>
<div class="a" style="left:1122px;top:191px;width:1px;height:17px;background:#fff"></div>
<div class="a" style="left:1143px;top:191px;width:1px;height:17px;background:#c4c4c4"></div>
<div class="a" style="left:1144px;top:191px;width:1px;height:17px;background:#fff"></div>
<div class="a" style="left:1164px;top:191px;width:1px;height:17px;background:#c4c4c4"></div>
<div class="a" style="left:1165px;top:191px;width:1px;height:17px;background:#fff"></div>
<div class="a" style="left:1189px;top:191px;width:1px;height:17px;background:#c4c4c4"></div>
<div class="a" style="left:1190px;top:191px;width:1px;height:17px;background:#fff"></div>
<div class="a" style="left:1207px;top:191px;width:1px;height:17px;background:#c4c4c4"></div>
<div class="a" style="left:1208px;top:191px;width:1px;height:17px;background:#fff"></div>
<div class="a" style="left:1245px;top:191px;width:1px;height:17px;background:#c4c4c4"></div>
<div class="a" style="left:1246px;top:191px;width:1px;height:17px;background:#fff"></div>
<div class="a" style="left:1069.5px;top:193.19px;font-size:11px;line-height:11px;white-space:pre;letter-spacing:-0.3px">Name</div>
<div class="a" style="left:1216.5px;top:193.19px;font-size:11px;line-height:11px;white-space:pre;letter-spacing:-0.5px">Color</div>
<svg class="a" style="left:1129px;top:193px;" width="10" height="12" viewBox="0 0 10 12"><ellipse cx="5" cy="3" rx="3.5" ry="2" fill="none" stroke="#333"/><path d="M1.5 3 V9 Q5 12 8.5 9 V3" fill="none" stroke="#333"/></svg>
<svg class="a" style="left:1151px;top:193px;" width="10" height="12" viewBox="0 0 10 12"><path d="M1 2 H9 M2 5 H8 L5 9Z" stroke="#000" fill="#000" stroke-width="1"/><path d="M1 10.5 H9" stroke="#333"/></svg>
<svg class="a" style="left:1172px;top:192px;" width="10" height="14" viewBox="0 0 10 14"><path d="M3 6 V4 A2 2 0 0 1 7 4 V6" fill="none" stroke="#000" stroke-width="1.2"/><rect x="2" y="6" width="6" height="6" rx="1" fill="#fff" stroke="#000"/><path d="M5 8 V10" stroke="#000"/></svg>
<svg class="a" style="left:1193px;top:192px;" width="10" height="14" viewBox="0 0 10 14"><path d="M3 2 H8 V7 H3Z" fill="#fff" stroke="#555" stroke-width=".8"/><path d="M1.5 7 H9 V11 H1.5Z" fill="#ddd" stroke="#333"/><path d="M2 11 H8.5 V13 H2Z" fill="#888"/></svg>
<div class="a" style="left:1060px;top:224px;width:186px;height:1px;background:#6e6e6e"></div>
<div class="a" style="left:1061.5px;top:212.19px;font-size:11px;line-height:11px;white-space:pre;color:#1a237e;letter-spacing:-0.3px">Layer 1</div>
<svg class="a" style="left:1149px;top:212px;" width="14" height="10" viewBox="0 0 14 10"><path d="M1 5 Q7 -1 13 5 Q7 9 1 5Z" fill="#fff" stroke="#222" stroke-width="1.1"/><circle cx="7" cy="4.5" r="2.3" fill="#222"/><path d="M1 3 Q7 -2 13 3" fill="none" stroke="#222" stroke-width="1.5"/></svg>
<svg class="a" style="left:1170px;top:211px;" width="12" height="12" viewBox="0 0 12 12"><path d="M6 5 V3.5 A2.5 2.5 0 0 1 11 3.5 V5" fill="none" stroke="#111" stroke-width="1.6"/><path d="M1.5 6 H8 V11 H1.5Z" fill="#222"/><circle cx="4.7" cy="8.5" r="1" fill="#fff"/></svg>
<svg class="a" style="left:1191px;top:211px;" width="13" height="12" viewBox="0 0 13 12"><path d="M4 1.5 H10 L9 5 H3Z" fill="#fff" stroke="#222" stroke-width=".9"/><path d="M1.5 5.5 H11.5 L10.5 10.5 H1Z" fill="#d8d8d8" stroke="#222" stroke-width="1"/><path d="M2 8 H10" stroke="#777"/></svg>
<div class="a" style="left:1223px;top:213px;width:20px;height:10px;background:#c4c4c4;border:1px dotted #444"></div>
<div class="a" style="left:1060px;top:238px;width:186px;height:1px;background:#6e6e6e"></div>
<div class="a" style="left:1061.5px;top:226.19px;font-size:11px;line-height:11px;white-space:pre;color:#000;letter-spacing:-0.3px">Layer 2</div>
<svg class="a" style="left:1149px;top:226px;" width="14" height="10" viewBox="0 0 14 10"><path d="M1 5 Q7 -1 13 5 Q7 9 1 5Z" fill="#fff" stroke="#222" stroke-width="1.1"/><circle cx="7" cy="4.5" r="2.3" fill="#222"/><path d="M1 3 Q7 -2 13 3" fill="none" stroke="#222" stroke-width="1.5"/></svg>
<svg class="a" style="left:1170px;top:225px;" width="12" height="12" viewBox="0 0 12 12"><path d="M6 5 V3.5 A2.5 2.5 0 0 1 11 3.5 V5" fill="none" stroke="#111" stroke-width="1.6"/><path d="M1.5 6 H8 V11 H1.5Z" fill="#222"/><circle cx="4.7" cy="8.5" r="1" fill="#fff"/></svg>
<svg class="a" style="left:1191px;top:225px;" width="13" height="12" viewBox="0 0 13 12"><path d="M4 1.5 H10 L9 5 H3Z" fill="#fff" stroke="#222" stroke-width=".9"/><path d="M1.5 5.5 H11.5 L10.5 10.5 H1Z" fill="#d8d8d8" stroke="#222" stroke-width="1"/><path d="M2 8 H10" stroke="#777"/></svg>
<div class="a" style="left:1223px;top:227px;width:20px;height:10px;background:#c4c4c4;border:1px dotted #444"></div>
<div class="a" style="left:1060px;top:252px;width:186px;height:1px;background:#6e6e6e"></div>
<div class="a" style="left:1061.5px;top:240.19px;font-size:11px;line-height:11px;white-space:pre;color:#000;letter-spacing:-0.3px">Layer 3</div>
<svg class="a" style="left:1149px;top:240px;" width="14" height="10" viewBox="0 0 14 10"><path d="M1 5 Q7 -1 13 5 Q7 9 1 5Z" fill="#fff" stroke="#222" stroke-width="1.1"/><circle cx="7" cy="4.5" r="2.3" fill="#222"/><path d="M1 3 Q7 -2 13 3" fill="none" stroke="#222" stroke-width="1.5"/></svg>
<svg class="a" style="left:1170px;top:239px;" width="12" height="12" viewBox="0 0 12 12"><path d="M6 5 V3.5 A2.5 2.5 0 0 1 11 3.5 V5" fill="none" stroke="#111" stroke-width="1.6"/><path d="M1.5 6 H8 V11 H1.5Z" fill="#222"/><circle cx="4.7" cy="8.5" r="1" fill="#fff"/></svg>
<svg class="a" style="left:1191px;top:239px;" width="13" height="12" viewBox="0 0 13 12"><path d="M4 1.5 H10 L9 5 H3Z" fill="#fff" stroke="#222" stroke-width=".9"/><path d="M1.5 5.5 H11.5 L10.5 10.5 H1Z" fill="#d8d8d8" stroke="#222" stroke-width="1"/><path d="M2 8 H10" stroke="#777"/></svg>
<div class="a" style="left:1223px;top:241px;width:20px;height:10px;background:#c4c4c4;border:1px dotted #444"></div>
<div class="a" style="left:1060px;top:266px;width:186px;height:1px;background:#6e6e6e"></div>
<div class="a" style="left:1061.5px;top:254.19px;font-size:11px;line-height:11px;white-space:pre;color:#000;letter-spacing:-0.3px">Layer 4</div>
<svg class="a" style="left:1149px;top:254px;" width="14" height="10" viewBox="0 0 14 10"><path d="M1 5 Q7 -1 13 5 Q7 9 1 5Z" fill="#fff" stroke="#222" stroke-width="1.1"/><circle cx="7" cy="4.5" r="2.3" fill="#222"/><path d="M1 3 Q7 -2 13 3" fill="none" stroke="#222" stroke-width="1.5"/></svg>
<svg class="a" style="left:1170px;top:253px;" width="12" height="12" viewBox="0 0 12 12"><path d="M6 5 V3.5 A2.5 2.5 0 0 1 11 3.5 V5" fill="none" stroke="#111" stroke-width="1.6"/><path d="M1.5 6 H8 V11 H1.5Z" fill="#222"/><circle cx="4.7" cy="8.5" r="1" fill="#fff"/></svg>
<svg class="a" style="left:1191px;top:253px;" width="13" height="12" viewBox="0 0 13 12"><path d="M4 1.5 H10 L9 5 H3Z" fill="#fff" stroke="#222" stroke-width=".9"/><path d="M1.5 5.5 H11.5 L10.5 10.5 H1Z" fill="#d8d8d8" stroke="#222" stroke-width="1"/><path d="M2 8 H10" stroke="#777"/></svg>
<div class="a" style="left:1223px;top:255px;width:20px;height:10px;background:#c4c4c4;border:1px dotted #444"></div>
<div class="a" style="left:1060px;top:280px;width:186px;height:1px;background:#6e6e6e"></div>
<div class="a" style="left:1061.5px;top:268.19px;font-size:11px;line-height:11px;white-space:pre;color:#000;letter-spacing:-0.3px">Layer 5</div>
<svg class="a" style="left:1149px;top:268px;" width="14" height="10" viewBox="0 0 14 10"><path d="M1 5 Q7 -1 13 5 Q7 9 1 5Z" fill="#fff" stroke="#222" stroke-width="1.1"/><circle cx="7" cy="4.5" r="2.3" fill="#222"/><path d="M1 3 Q7 -2 13 3" fill="none" stroke="#222" stroke-width="1.5"/></svg>
<svg class="a" style="left:1170px;top:267px;" width="12" height="12" viewBox="0 0 12 12"><path d="M6 5 V3.5 A2.5 2.5 0 0 1 11 3.5 V5" fill="none" stroke="#111" stroke-width="1.6"/><path d="M1.5 6 H8 V11 H1.5Z" fill="#222"/><circle cx="4.7" cy="8.5" r="1" fill="#fff"/></svg>
<svg class="a" style="left:1191px;top:267px;" width="13" height="12" viewBox="0 0 13 12"><path d="M4 1.5 H10 L9 5 H3Z" fill="#fff" stroke="#222" stroke-width=".9"/><path d="M1.5 5.5 H11.5 L10.5 10.5 H1Z" fill="#d8d8d8" stroke="#222" stroke-width="1"/><path d="M2 8 H10" stroke="#777"/></svg>
<div class="a" style="left:1223px;top:269px;width:20px;height:10px;background:#c4c4c4;border:1px dotted #444"></div>
<div class="a" style="left:1060px;top:294px;width:186px;height:1px;background:#6e6e6e"></div>
<div class="a" style="left:1061.5px;top:282.19px;font-size:11px;line-height:11px;white-space:pre;color:#000;letter-spacing:-0.3px">Layer 6</div>
<svg class="a" style="left:1149px;top:282px;" width="14" height="10" viewBox="0 0 14 10"><path d="M1 5 Q7 -1 13 5 Q7 9 1 5Z" fill="#fff" stroke="#222" stroke-width="1.1"/><circle cx="7" cy="4.5" r="2.3" fill="#222"/><path d="M1 3 Q7 -2 13 3" fill="none" stroke="#222" stroke-width="1.5"/></svg>
<svg class="a" style="left:1170px;top:281px;" width="12" height="12" viewBox="0 0 12 12"><path d="M6 5 V3.5 A2.5 2.5 0 0 1 11 3.5 V5" fill="none" stroke="#111" stroke-width="1.6"/><path d="M1.5 6 H8 V11 H1.5Z" fill="#222"/><circle cx="4.7" cy="8.5" r="1" fill="#fff"/></svg>
<svg class="a" style="left:1191px;top:281px;" width="13" height="12" viewBox="0 0 13 12"><path d="M4 1.5 H10 L9 5 H3Z" fill="#fff" stroke="#222" stroke-width=".9"/><path d="M1.5 5.5 H11.5 L10.5 10.5 H1Z" fill="#d8d8d8" stroke="#222" stroke-width="1"/><path d="M2 8 H10" stroke="#777"/></svg>
<div class="a" style="left:1223px;top:283px;width:20px;height:10px;background:#c4c4c4;border:1px dotted #444"></div>
<div class="a" style="left:1060px;top:308px;width:186px;height:1px;background:#6e6e6e"></div>
<div class="a" style="left:1061.5px;top:296.19px;font-size:11px;line-height:11px;white-space:pre;color:#000;letter-spacing:-0.3px">Layer 7</div>
<svg class="a" style="left:1149px;top:296px;" width="14" height="10" viewBox="0 0 14 10"><path d="M1 5 Q7 -1 13 5 Q7 9 1 5Z" fill="#fff" stroke="#222" stroke-width="1.1"/><circle cx="7" cy="4.5" r="2.3" fill="#222"/><path d="M1 3 Q7 -2 13 3" fill="none" stroke="#222" stroke-width="1.5"/></svg>
<svg class="a" style="left:1170px;top:295px;" width="12" height="12" viewBox="0 0 12 12"><path d="M6 5 V3.5 A2.5 2.5 0 0 1 11 3.5 V5" fill="none" stroke="#111" stroke-width="1.6"/><path d="M1.5 6 H8 V11 H1.5Z" fill="#222"/><circle cx="4.7" cy="8.5" r="1" fill="#fff"/></svg>
<svg class="a" style="left:1191px;top:295px;" width="13" height="12" viewBox="0 0 13 12"><path d="M4 1.5 H10 L9 5 H3Z" fill="#fff" stroke="#222" stroke-width=".9"/><path d="M1.5 5.5 H11.5 L10.5 10.5 H1Z" fill="#d8d8d8" stroke="#222" stroke-width="1"/><path d="M2 8 H10" stroke="#777"/></svg>
<div class="a" style="left:1223px;top:297px;width:20px;height:10px;background:#c4c4c4;border:1px dotted #444"></div>
<div class="a" style="left:1060px;top:322px;width:186px;height:1px;background:#6e6e6e"></div>
<div class="a" style="left:1061.5px;top:310.19px;font-size:11px;line-height:11px;white-space:pre;color:#000;letter-spacing:-0.3px">Layer 8</div>
<svg class="a" style="left:1149px;top:310px;" width="14" height="10" viewBox="0 0 14 10"><path d="M1 5 Q7 -1 13 5 Q7 9 1 5Z" fill="#fff" stroke="#222" stroke-width="1.1"/><circle cx="7" cy="4.5" r="2.3" fill="#222"/><path d="M1 3 Q7 -2 13 3" fill="none" stroke="#222" stroke-width="1.5"/></svg>
<svg class="a" style="left:1170px;top:309px;" width="12" height="12" viewBox="0 0 12 12"><path d="M6 5 V3.5 A2.5 2.5 0 0 1 11 3.5 V5" fill="none" stroke="#111" stroke-width="1.6"/><path d="M1.5 6 H8 V11 H1.5Z" fill="#222"/><circle cx="4.7" cy="8.5" r="1" fill="#fff"/></svg>
<svg class="a" style="left:1191px;top:309px;" width="13" height="12" viewBox="0 0 13 12"><path d="M4 1.5 H10 L9 5 H3Z" fill="#fff" stroke="#222" stroke-width=".9"/><path d="M1.5 5.5 H11.5 L10.5 10.5 H1Z" fill="#d8d8d8" stroke="#222" stroke-width="1"/><path d="M2 8 H10" stroke="#777"/></svg>
<div class="a" style="left:1223px;top:311px;width:20px;height:10px;background:#c4c4c4;border:1px dotted #444"></div>
<div class="a" style="left:1060px;top:336px;width:186px;height:1px;background:#6e6e6e"></div>
<div class="a" style="left:1061.5px;top:324.19px;font-size:11px;line-height:11px;white-space:pre;color:#000;letter-spacing:-0.3px">Layer 9</div>
<svg class="a" style="left:1149px;top:324px;" width="14" height="10" viewBox="0 0 14 10"><path d="M1 5 Q7 -1 13 5 Q7 9 1 5Z" fill="#fff" stroke="#222" stroke-width="1.1"/><circle cx="7" cy="4.5" r="2.3" fill="#222"/><path d="M1 3 Q7 -2 13 3" fill="none" stroke="#222" stroke-width="1.5"/></svg>
<svg class="a" style="left:1170px;top:323px;" width="12" height="12" viewBox="0 0 12 12"><path d="M6 5 V3.5 A2.5 2.5 0 0 1 11 3.5 V5" fill="none" stroke="#111" stroke-width="1.6"/><path d="M1.5 6 H8 V11 H1.5Z" fill="#222"/><circle cx="4.7" cy="8.5" r="1" fill="#fff"/></svg>
<svg class="a" style="left:1191px;top:323px;" width="13" height="12" viewBox="0 0 13 12"><path d="M4 1.5 H10 L9 5 H3Z" fill="#fff" stroke="#222" stroke-width=".9"/><path d="M1.5 5.5 H11.5 L10.5 10.5 H1Z" fill="#d8d8d8" stroke="#222" stroke-width="1"/><path d="M2 8 H10" stroke="#777"/></svg>
<div class="a" style="left:1223px;top:325px;width:20px;height:10px;background:#c4c4c4;border:1px dotted #444"></div>
<svg class="a" style="left:1127px;top:214px;" width="10" height="10" viewBox="0 0 10 10"><circle cx="5" cy="5" r="4.2" fill="#6a8ae8" stroke="#2848a8" stroke-width=".9"/><path d="M1 5 H9" stroke="#dde6fc" stroke-width="1.2"/></svg>
<div class="a" style="left:1136px;top:360px;width:57px;height:19px;background:linear-gradient(#fefefe,#e4e4e4 60%,#d4d4d4);border:1px solid #7c7c7c;border-radius:2px;box-shadow:inset 0 0 0 1px #fff"></div>
<div class="a" style="left:1155px;top:364.69px;font-size:11px;line-height:11px;white-space:pre;letter-spacing:-0.2px">Add</div>
<div class="a" style="left:1199px;top:360px;width:57px;height:19px;background:linear-gradient(#fefefe,#e4e4e4 60%,#d4d4d4);border:1px solid #7c7c7c;border-radius:2px;box-shadow:inset 0 0 0 1px #fff"></div>
<div class="a" style="left:1211px;top:364.69px;font-size:11px;line-height:11px;white-space:pre;letter-spacing:-0.2px">Delete</div>
<div class="a" style="left:1274px;top:142px;width:1px;height:692px;background:#a8a8a8"></div>
<div class="a" style="left:1275px;top:142px;width:1px;height:692px;background:#fff"></div>
<div class="a" style="left:1040px;top:833px;width:236px;height:1px;background:#a8a8a8"></div>
<div class="a" style="left:4px;top:834px;width:1272px;height:26px;background:#e1e1e1"></div>
<div class="a" style="left:4px;top:834px;width:1272px;height:27px;background:#e4e4e4;border-top:1px solid #fbfbfb;border-bottom:1px solid #b4b4b4"></div>
<div class="a" style="left:8px;top:838px;width:3px;height:18px;border-left:1px solid #fff;border-right:1px solid #b0b0b0"></div>
<div class="combo" style="left:17px;top:837px;width:138px;height:21px"></div>
<div class="cbtn" style="left:154px;top:837px;width:17px;height:21px"></div>
<svg class="a" style="left:158px;top:844px;" width="10" height="8" viewBox="0 0 10 8"><path d="M1.5 1.5 L5 5 L8.5 1.5" fill="none" stroke="#333" stroke-width="2"/></svg>
<svg class="a" style="left:21px;top:840px;" width="16" height="16" viewBox="0 0 16 16"><text x="0" y="11" font-family="Liberation Serif" font-weight="bold" font-size="12" fill="#555">T</text><text x="4" y="15" font-family="Liberation Serif" font-weight="bold" font-size="12" fill="#000">T</text></svg>
<div class="a" style="left:42px;top:842.00px;font-size:13px;line-height:13px;white-space:pre;">Arial</div>
<div class="combo" style="left:178px;top:837px;width:37px;height:21px"></div>
<div class="cbtn" style="left:214px;top:837px;width:17px;height:21px"></div>
<svg class="a" style="left:218px;top:844px;" width="10" height="8" viewBox="0 0 10 8"><path d="M1.5 1.5 L5 5 L8.5 1.5" fill="none" stroke="#333" stroke-width="2"/></svg>
<div class="a" style="left:183px;top:842.69px;font-size:11px;line-height:11px;white-space:pre;">6</div>
<div class="vsep" style="left:237px;top:839px;height:17px"></div>
<svg class="a" style="left:245px;top:839px;" width="28" height="16" viewBox="0 0 28 16"><text x="0" y="14" font-family="Liberation Serif" font-weight="bold" font-size="14" fill="#1c3c8c">A</text><path d="M10 5 L12.5 1.5 L15 5Z" fill="#1c3c8c"/></svg>
<svg class="a" style="left:267px;top:839px;" width="28" height="16" viewBox="0 0 28 16"><text x="1" y="14" font-family="Liberation Serif" font-weight="bold" font-size="11" fill="#1c3c8c">A</text><path d="M9 3 H14 L11.5 6Z" fill="#1c3c8c"/></svg>
<svg class="a" style="left:288px;top:839px;" width="28" height="16" viewBox="0 0 28 16"><text x="0" y="15" font-family="Liberation Serif" font-weight="bold" font-size="12" fill="#c01818">A</text><path d="M6 9 L12 3 L15 6 L9 12Z" fill="#fff" stroke="#1c3c8c"/><path d="M17 7 L20 9.5 L17 12Z" fill="#000"/></svg>
<svg class="a" style="left:316px;top:839px;" width="28" height="16" viewBox="0 0 28 16"><rect x="1" y="4" width="12" height="11" fill="#f0c020"/><text x="2" y="14" font-family="Liberation Serif" font-weight="bold" font-size="11" fill="#1c3c8c">A</text><path d="M8 8 L13 2 L16 5 L11 11Z" fill="#fff" stroke="#1c3c8c"/><path d="M24 7 L27 9.5 L24 12Z" fill="#000"/></svg>
<div class="vsep" style="left:350px;top:839px;height:17px"></div>
<div class="a" style="left:378px;top:838px;width:21px;height:19px;background:#f0f0f0;border:1px solid #c8c8c8;border-bottom-color:#fff;border-right-color:#fff"></div>
<div class="a" style="left:444px;top:838px;width:22px;height:19px;background:#f0f0f0;border:1px solid #c8c8c8;border-bottom-color:#fff;border-right-color:#fff"></div>
<div class="a" style="left:360px;top:841.00px;font-size:13px;line-height:13px;white-space:pre;font-family:'Liberation Serif';font-weight:bold;color:#1c3c8c">B</div>
<div class="a" style="left:383px;top:841.00px;font-size:13px;line-height:13px;white-space:pre;font-family:'Liberation Serif';font-weight:bold;font-style:italic;color:#1c3c8c">I</div>
<div class="a" style="left:403px;top:841.00px;font-size:13px;line-height:13px;white-space:pre;font-family:'Liberation Serif';font-weight:bold;color:#1c3c8c"><span style="text-decoration:underline">U</span></div>
<div class="a" style="left:425px;top:842.84px;font-size:12px;line-height:12px;white-space:pre;font-family:'Liberation Serif';font-weight:bold;color:#1c3c8c">A<sup style="font-size:8px;vertical-align:6px">2</sup></div>
<div class="a" style="left:447px;top:842.84px;font-size:12px;line-height:12px;white-space:pre;font-family:'Liberation Serif';font-weight:bold;color:#1c3c8c">A<sub style="font-size:8px;vertical-align:-3px">2</sub></div>
<div class="vsep" style="left:470px;top:839px;height:17px"></div>
<svg class="a" style="left:476px;top:840px;" width="14" height="16" viewBox="0 0 14 16"><rect x=".5" y=".5" width="13" height="14" fill="#dfeaf8" stroke="#1c3c8c"/><path d="M2 3.5 H12" stroke="#1c3c8c"/><path d="M2 6.5 H9" stroke="#1c3c8c"/><path d="M2 9.5 H12" stroke="#1c3c8c"/><path d="M2 12.5 H9" stroke="#1c3c8c"/></svg>
<svg class="a" style="left:498px;top:840px;" width="14" height="16" viewBox="0 0 14 16"><rect x=".5" y=".5" width="13" height="14" fill="#dfeaf8" stroke="#1c3c8c"/><path d="M2.0 3.5 H12.0" stroke="#1c3c8c"/><path d="M3.5 6.5 H10.5" stroke="#1c3c8c"/><path d="M2.0 9.5 H12.0" stroke="#1c3c8c"/><path d="M3.5 12.5 H10.5" stroke="#1c3c8c"/></svg>
<svg class="a" style="left:520px;top:840px;" width="14" height="16" viewBox="0 0 14 16"><rect x=".5" y=".5" width="13" height="14" fill="#dfeaf8" stroke="#1c3c8c"/><path d="M2 3.5 H12" stroke="#1c3c8c"/><path d="M5 6.5 H12" stroke="#1c3c8c"/><path d="M2 9.5 H12" stroke="#1c3c8c"/><path d="M5 12.5 H12" stroke="#1c3c8c"/></svg>
<div class="vsep" style="left:543px;top:839px;height:17px"></div>
<svg class="a" style="left:550px;top:840px;" width="16" height="16" viewBox="0 0 16 16"><rect x="1.5" y=".5" width="13" height="14" fill="#dfeaf8" stroke="#1c3c8c"/><path d="M3.5 3.5 H12.5 M3.5 5.5 H12.5" stroke="#1c3c8c"/></svg>
<svg class="a" style="left:571px;top:840px;" width="16" height="16" viewBox="0 0 16 16"><rect x="1.5" y=".5" width="13" height="14" fill="#dfeaf8" stroke="#1c3c8c"/><path d="M3.5 7.5 H12.5 M3.5 9.5 H12.5" stroke="#1c3c8c"/></svg>
<div class="a" style="left:591px;top:838px;width:22px;height:19px;background:#f0f0f0;border:1px solid #c8c8c8;border-bottom-color:#fff;border-right-color:#fff"></div>
<svg class="a" style="left:594px;top:840px;" width="16" height="16" viewBox="0 0 16 16"><rect x="1.5" y=".5" width="13" height="14" fill="#dfeaf8" stroke="#1c3c8c"/><path d="M3.5 11.5 H12.5 M3.5 13.5 H12.5" stroke="#1c3c8c"/></svg>
<div class="vsep" style="left:617px;top:839px;height:17px"></div>
<svg class="a" style="left:623px;top:840px;" width="16" height="16" viewBox="0 0 16 16"><rect x="1.5" y="1.5" width="13" height="13" fill="#fff" stroke="#208080"/><text x="3" y="12" font-family="Liberation Serif" font-weight="bold" font-size="11" fill="#1c3c8c">A</text><g fill="#208080"><rect x="0" y="0" width="3" height="3"/><rect x="13" y="0" width="3" height="3"/><rect x="0" y="13" width="3" height="3"/><rect x="13" y="13" width="3" height="3"/></g></svg>
<div class="a" style="left:643px;top:835px;width:1px;height:24px;background:#b4b4b4"></div>
<div class="a" style="left:4px;top:861px;width:1272px;height:19px;background:#f3f3f3;border-top:1px solid #fff;border-bottom:1px solid #fff"></div>
<div class="a" style="left:4px;top:862px;width:1272px;height:1px;background:#e2e2e2"></div>
<div class="a" style="left:0px;top:882px;width:1279px;height:1px;background:#6a6a6a"></div>
<div class="a" style="left:6px;top:866.69px;font-size:11px;line-height:11px;white-space:pre;">Close active library</div>
<div class="a" style="left:903px;top:863px;width:1px;height:16px;background:#c0c0c0"></div>
<div class="a" style="left:904px;top:863px;width:1px;height:16px;background:#fff"></div>
<div class="a" style="left:1091px;top:863px;width:1px;height:16px;background:#c0c0c0"></div>
<div class="a" style="left:1092px;top:863px;width:1px;height:16px;background:#fff"></div>
<div class="a" style="left:1159px;top:863px;width:1px;height:16px;background:#c0c0c0"></div>
<div class="a" style="left:1160px;top:863px;width:1px;height:16px;background:#fff"></div>
<div class="a" style="left:1191px;top:863px;width:1px;height:16px;background:#c0c0c0"></div>
<div class="a" style="left:1192px;top:863px;width:1px;height:16px;background:#fff"></div>
<div class="a" style="left:1223px;top:863px;width:1px;height:16px;background:#c0c0c0"></div>
<div class="a" style="left:1224px;top:863px;width:1px;height:16px;background:#fff"></div>
<div class="a" style="left:1254px;top:863px;width:1px;height:16px;background:#c0c0c0"></div>
<div class="a" style="left:1255px;top:863px;width:1px;height:16px;background:#fff"></div>
<div class="a" style="left:908px;top:866.69px;font-size:11px;line-height:11px;white-space:pre;">Mouse: [ 57/64, 7/64 ]</div>
<div class="a" style="left:1164.5px;top:866.69px;font-size:11px;line-height:11px;white-space:pre;letter-spacing:-0.3px">OVR</div>
<div class="a" style="left:1196.5px;top:866.69px;font-size:11px;line-height:11px;white-space:pre;letter-spacing:-0.5px">NUM</div>
<svg class="a" style="left:1262px;top:866px;" width="12" height="12" viewBox="0 0 12 12"><g fill="#b8b8b8"><rect x="9" y="1" width="2" height="2"/><rect x="6" y="4" width="2" height="2"/><rect x="9" y="4" width="2" height="2"/><rect x="3" y="7" width="2" height="2"/><rect x="6" y="7" width="2" height="2"/><rect x="9" y="7" width="2" height="2"/></g></svg>
</body></html>
